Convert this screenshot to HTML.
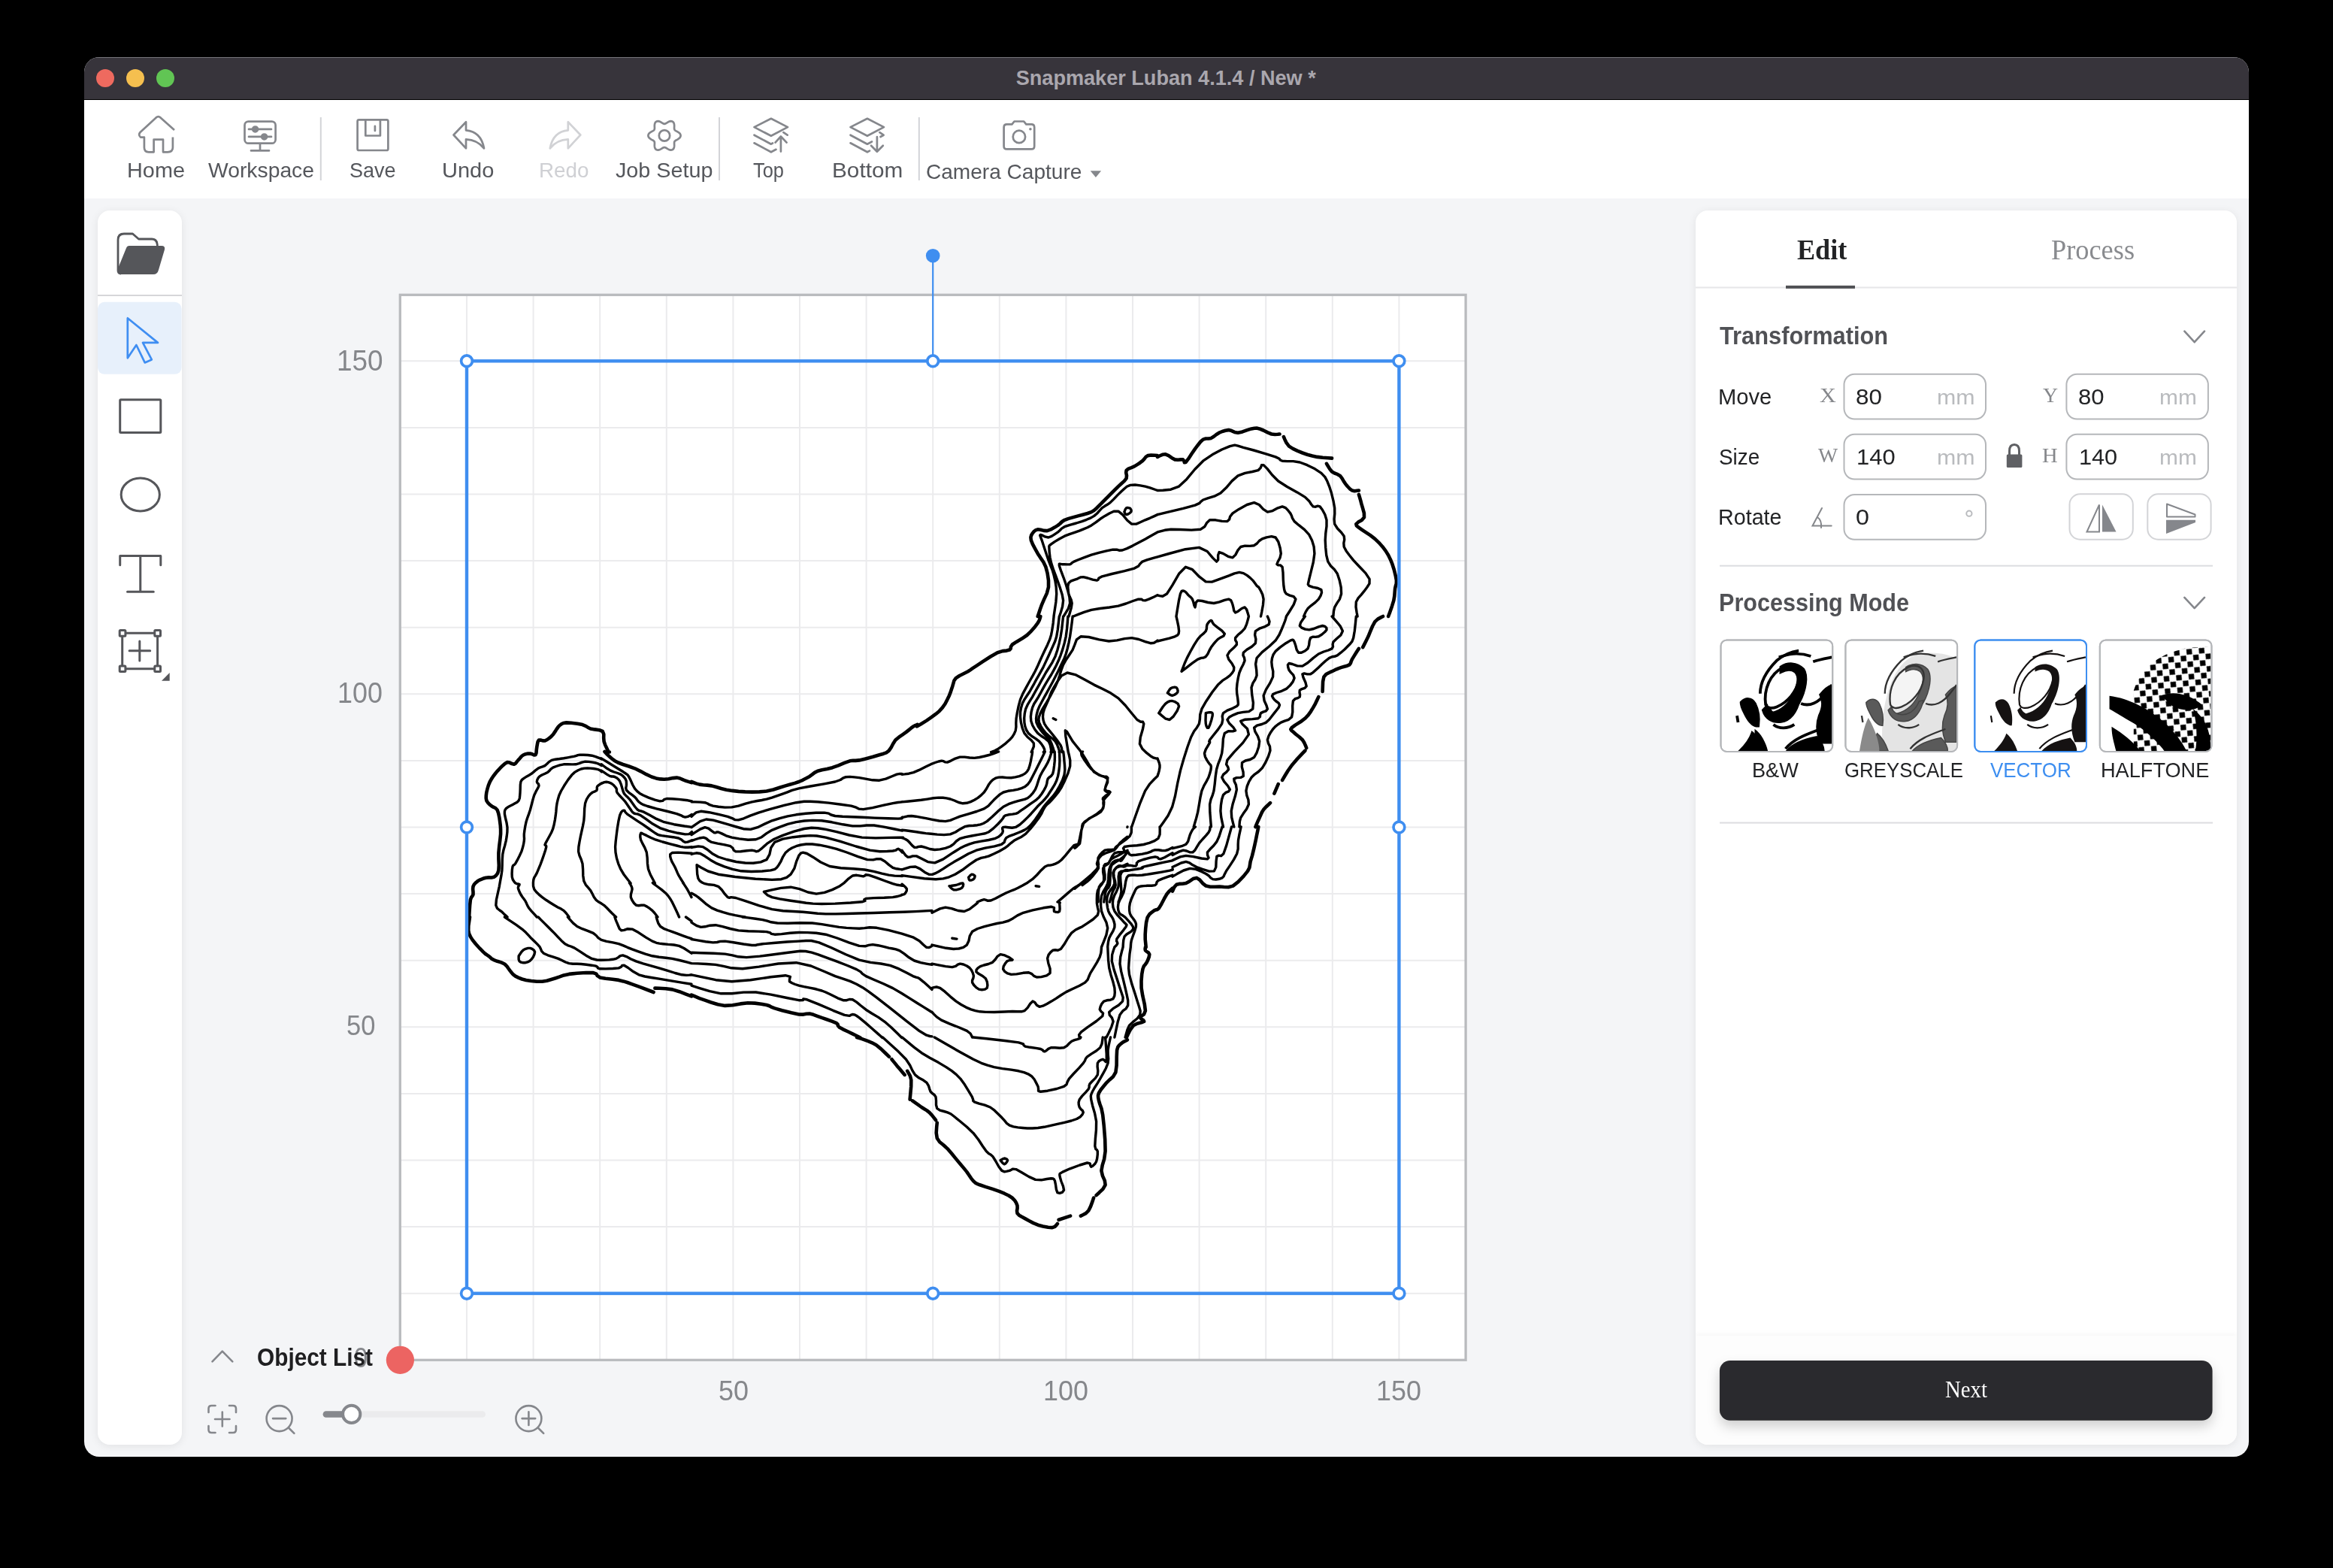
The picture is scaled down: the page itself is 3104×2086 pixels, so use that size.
<!DOCTYPE html>
<html><head><meta charset="utf-8">
<style>
*{box-sizing:border-box;margin:0;padding:0}
html,body{width:3104px;height:2086px;background:#000;overflow:hidden;position:relative}
.tx{position:absolute;white-space:nowrap;line-height:1}
.ov{position:absolute;left:0;top:0}
#win{position:absolute;left:112px;top:76px;width:2880px;height:1862px;border-radius:20px;overflow:hidden;background:#f4f5f7}
#title{position:absolute;left:0;top:0;width:100%;height:57px;background:#37343b;border-top:1.5px solid #77757b;border-bottom:1px solid #000}
.dot{position:absolute;top:14.5px;width:24px;height:24px;border-radius:50%}
#tb{position:absolute;left:0;top:57px;width:100%;height:131px;background:#fff}
#side{position:absolute;left:18px;top:204px;width:112px;height:1642px;background:#fff;border-radius:16px;box-shadow:0 2px 12px rgba(0,0,0,0.08)}
#rp{position:absolute;left:2144px;top:204px;width:720px;height:1642px;background:#fff;border-radius:16px;box-shadow:0 2px 12px rgba(0,0,0,0.08);overflow:hidden}
#rpb{position:absolute;left:0;top:1497px;width:720px;height:145px;background:#fdfdfd;box-shadow:0 -3px 6px rgba(0,0,0,0.03)}
</style></head>
<body>
<div id="win">
  <div id="title">
    <div class="dot" style="left:16px;background:#ee6a5f"></div>
    <div class="dot" style="left:56px;background:#f5bf4f"></div>
    <div class="dot" style="left:96px;background:#61c554"></div>
  </div>
  <div id="tb"></div>
  <div id="side"></div>
  <div id="rp"><div id="rpb"></div></div>
</div>
<svg class="ov" width="3104" height="2086" viewBox="0 0 3104 2086"><defs><filter id="btnsh" x="-10%" y="-50%" width="120%" height="200%"><feDropShadow dx="0" dy="8" stdDeviation="8" flood-color="#000" flood-opacity="0.18"/></filter></defs>
<g fill="none" stroke="#85878c" stroke-width="2.7" stroke-linecap="round" stroke-linejoin="round"><path d="M232,173.1 L213.5,156.4 Q210.6,154 207.7,156.4 L186.5,176 Q183.5,179.5 187,182.6 L191.9,182.6 L191.9,196.3 Q191.9,202.3 197.9,202.3 L204.6,202.3 L204.6,185.6 L217,185.6 L217,202.3 L223,202.3 Q229.9,202.3 229.9,196.3 L229.9,182.6" stroke-linecap="butt"/><rect x="325.5" y="161.6" width="41.1" height="29.1" rx="5"/><path d="M331,171.9 H361 M331,181.9 H361 M346,192 V199.7 M334,200.4 H358"/><circle cx="339.6" cy="171.9" r="3.4" fill="#85878c"/><circle cx="351.6" cy="181.9" r="3.4" fill="#85878c"/><rect x="475.6" y="159.3" width="40.8" height="40.7" rx="2"/><path d="M486.3,159.3 V180.5 H505.9 V159.3 M498.9,167.8 V174"/><path d="M603.5,179.5 L620,162.3 L620,173.3 Q640,175 644,197.3 Q635,186 620,185.4 L620,197.3 Z"/></g><g fill="none" stroke="#d1d2d5" stroke-width="2.7" stroke-linecap="round" stroke-linejoin="round"><path d="M772.3,179.5 L755.8,162.3 L755.8,173.3 Q735.8,175 731.8,197.3 Q740.8,186 755.8,185.4 L755.8,197.3 Z"/></g><g fill="none" stroke="#85878c" stroke-width="2.7" stroke-linecap="round" stroke-linejoin="round"><path d="M905.60,180.40 L905.42,179.28 L904.91,178.20 L904.11,177.21 L903.10,176.34 L901.97,175.59 L900.81,174.94 L899.72,174.37 L898.77,173.82 L898.03,173.25 L897.51,172.60 L897.21,171.82 L897.08,170.89 L897.08,169.80 L897.13,168.57 L897.15,167.25 L897.07,165.89 L896.82,164.57 L896.36,163.39 L895.68,162.41 L894.80,161.69 L893.74,161.29 L892.55,161.19 L891.30,161.39 L890.03,161.83 L888.81,162.43 L887.67,163.11 L886.63,163.77 L885.69,164.32 L884.82,164.67 L884.00,164.80 L883.18,164.67 L882.31,164.32 L881.37,163.77 L880.33,163.11 L879.19,162.43 L877.97,161.83 L876.70,161.39 L875.45,161.19 L874.26,161.29 L873.20,161.69 L872.32,162.41 L871.64,163.39 L871.18,164.57 L870.93,165.89 L870.85,167.25 L870.87,168.57 L870.92,169.80 L870.92,170.89 L870.79,171.82 L870.49,172.60 L869.97,173.25 L869.23,173.82 L868.28,174.37 L867.19,174.94 L866.03,175.59 L864.90,176.34 L863.89,177.21 L863.09,178.20 L862.58,179.28 L862.40,180.40 L862.58,181.52 L863.09,182.60 L863.89,183.59 L864.90,184.46 L866.03,185.21 L867.19,185.86 L868.28,186.43 L869.23,186.98 L869.97,187.55 L870.49,188.20 L870.79,188.98 L870.92,189.91 L870.92,191.00 L870.87,192.23 L870.85,193.55 L870.93,194.91 L871.18,196.23 L871.64,197.41 L872.32,198.39 L873.20,199.11 L874.26,199.51 L875.45,199.61 L876.70,199.41 L877.97,198.97 L879.19,198.37 L880.33,197.69 L881.37,197.03 L882.31,196.48 L883.18,196.13 L884.00,196.00 L884.82,196.13 L885.69,196.48 L886.63,197.03 L887.67,197.69 L888.81,198.37 L890.03,198.97 L891.30,199.41 L892.55,199.61 L893.74,199.51 L894.80,199.11 L895.68,198.39 L896.36,197.41 L896.82,196.23 L897.07,194.91 L897.15,193.55 L897.13,192.23 L897.08,191.00 L897.08,189.91 L897.21,188.98 L897.51,188.20 L898.03,187.55 L898.77,186.98 L899.72,186.43 L900.81,185.86 L901.97,185.21 L903.10,184.46 L904.11,183.59 L904.91,182.60 L905.42,181.52 L905.60,180.40Z"/><circle cx="884" cy="180.4" r="7.2"/><path d="M1025.9,157.8 L1048,169.1 L1025.9,180.8 L1003.5,169.1 Z"/><path d="M1003.5,179.7 L1025.9,191.7 L1028,190.5 M1042.4,176.2 L1047.6,179.7"/><path d="M1003.5,190.3 L1025.9,202.3 L1032.5,198.8"/><path d="M1038.9,182 V201.6 M1031.5,189.6 L1038.9,181.5 L1046.6,189.6"/><path d="M1153.9,157.8 L1176,169.1 L1153.9,180.8 L1131.5,169.1 Z"/><path d="M1131.5,179.7 L1153.9,191.7 L1160,188.5 M1170.4,176.2 L1175.6,179.7 L1171.5,182"/><path d="M1131.5,190.3 L1153.9,202.3 L1157,200.6"/><path d="M1166.9,182 V201.6 M1159,193.8 L1166.9,201.8 L1174.8,193.8"/><path d="M1339.6,165.4 H1346.4 L1349.5,161.5 H1362.2 L1365.3,165.4 H1372.2 Q1376.2,165.4 1376.2,169.4 V194.4 Q1376.2,198.4 1372.2,198.4 H1339.6 Q1335.6,198.4 1335.6,194.4 V169.4 Q1335.6,165.4 1339.6,165.4 Z"/><circle cx="1355.9" cy="181.9" r="8.2"/></g><circle cx="1370.9" cy="171.8" r="1.8" fill="#85878c"/><path d="M1450.7,227.2 H1465.1 L1457.9,235.9 Z" fill="#85878c"/><rect x="425.8" y="156" width="2" height="84" fill="#d3d4d8"/><rect x="956" y="156" width="2" height="84" fill="#d3d4d8"/><rect x="1221.8" y="156" width="2" height="84" fill="#d3d4d8"/><path d="M161,364 Q157,364 157,360 L157,319 Q157,311 165,311 L176.5,311 L184.5,318 L202,318 Q208,318 209,324 L209.5,327" fill="none" stroke="#55565a" stroke-width="2.8" stroke-linejoin="round"/><path d="M172,327 L215,327 Q220,327 219,332 L211,359 Q209.5,365 204,365 L161,365 Q157,365 157,361 L157,357 L168,330 Q169,327 172,327 Z" fill="#55565a"/><rect x="130" y="401.8" width="111.6" height="96" rx="9" fill="#e7f0fb"/><rect x="130" y="392" width="112" height="2" fill="#d6d6d9"/><path d="M169.8,423.3 L169.8,476.3 L181.4,459 L192.7,482.4 L201.8,478.4 L190,455.9 L210,455.9 Z" fill="none" stroke="#3f8ef2" stroke-width="2.7" stroke-linejoin="round"/><g fill="none" stroke="#55565a" stroke-width="3" stroke-linecap="round" stroke-linejoin="round"><rect x="159.7" y="531.8" width="54.1" height="43.8" rx="1"/><ellipse cx="186.75" cy="658" rx="25.6" ry="21.9"/><path d="M159.7,751.8 V739.4 H213.8 V751.8 M186.75,739.4 V787.3 M169.5,787.3 H204.3"/><path d="M167.6,842.3 H204.3 M167.6,889.7 H204.3 M162.7,847.7 V884.4 M209.6,847.7 V884.4 M172.1,865.7 H199.7 M185.8,853 V879"/><rect x="159.2" y="838.5" width="7.7" height="7.7" rx="1"/><rect x="205.8" y="838.5" width="7.7" height="7.7" rx="1"/><rect x="159.2" y="885.9" width="7.7" height="7.7" rx="1"/><rect x="205.8" y="885.9" width="7.7" height="7.7" rx="1"/></g><path d="M215,905.8 H225.7 V895 Z" fill="#55565a"/><rect x="531" y="391" width="1420.5" height="1419" fill="#ffffff"/><path d="M621.0,393 V1808 M533,1720.7 H1949 M709.6,393 V1808 M533,1632.1 H1949 M798.2,393 V1808 M533,1543.5 H1949 M886.8,393 V1808 M533,1454.9 H1949 M975.4,393 V1808 M533,1366.3 H1949 M1064.0,393 V1808 M533,1277.7 H1949 M1152.6,393 V1808 M533,1189.1 H1949 M1241.2,393 V1808 M533,1100.5 H1949 M1329.8,393 V1808 M533,1011.9 H1949 M1418.4,393 V1808 M533,923.3 H1949 M1507.0,393 V1808 M533,834.7 H1949 M1595.6,393 V1808 M533,746.1 H1949 M1684.2,393 V1808 M533,657.5 H1949 M1772.8,393 V1808 M533,568.9 H1949 M1861.4,393 V1808 M533,480.3 H1949" stroke="#ebebed" stroke-width="2" fill="none"/><rect x="532.3" y="392.3" width="1417.8" height="1417" fill="none" stroke="#b9bbbe" stroke-width="3.3"/><path d="M800.5,1009.9 L800.8,1010.0 L801.1,1010.1 L800.0,1009.6 L796.9,1008.3 L792.4,1006.6 L787.5,1005.2 L782.1,1004.5 L776.3,1004.3 L771.4,1004.3 L768.7,1004.6 L766.9,1005.3 L764.3,1006.1 L760.1,1006.9 L755.2,1007.8 L750.0,1008.7 L744.5,1009.5 L738.8,1010.2 L733.9,1011.4 L730.4,1013.6 L727.7,1016.3 L725.0,1018.6 L722.0,1019.9 L719.0,1020.8 L716.1,1022.1 L713.1,1024.3 L710.1,1026.9 L707.1,1029.3 L704.0,1031.2 L700.9,1032.9 L698.2,1034.6 L696.0,1036.1 L694.2,1037.6 L692.9,1040.0 L692.3,1044.2 L692.2,1049.5 L692.0,1054.3 L691.7,1058.3 L691.3,1062.0 L690.2,1065.0 L688.0,1067.2 L685.1,1068.8 L682.1,1070.4 L679.0,1072.1 L675.7,1073.8 L673.2,1075.7 L671.9,1077.6 L671.4,1079.6 L671.4,1082.9 L672.4,1088.0 L674.0,1094.4 L675.0,1100.7 L674.9,1106.7 L674.2,1112.6 L673.2,1118.6 L671.8,1124.4 L670.1,1130.2 L668.8,1136.4 L668.3,1143.3 L668.2,1150.6 L667.9,1157.9 L666.9,1164.9 L665.6,1171.9 L664.3,1179.3 L662.4,1187.9 L660.4,1197.0 L659.8,1204.3 L661.6,1208.5 L664.8,1211.0 L667.9,1213.2 L670.6,1215.9 L673.2,1218.3 L675.0,1220.0 M800.5,1018.5 L798.8,1017.5 L796.2,1016.2 L792.9,1015.0 L788.5,1014.1 L783.4,1013.4 L778.6,1013.2 L774.4,1014.1 L770.4,1015.7 L766.1,1016.8 L760.9,1016.9 L755.4,1016.6 L750.0,1016.8 L744.8,1017.9 L739.9,1019.5 L735.7,1021.2 L732.9,1023.2 L731.0,1025.4 L728.6,1027.5 L725.0,1029.3 L721.0,1031.0 L717.9,1032.9 L715.9,1035.2 L714.7,1037.7 L714.3,1040.0 L715.0,1041.7 L716.5,1043.1 L717.0,1045.4 L715.5,1048.7 L713.1,1052.9 L710.7,1057.9 L708.9,1064.0 L707.1,1071.0 L705.4,1077.5 L703.5,1083.1 L701.6,1088.3 L700.0,1093.6 L698.8,1099.2 L697.9,1104.8 L697.3,1109.6 L697.3,1112.9 L697.5,1115.5 L697.3,1118.6 L696.6,1122.9 L695.4,1127.8 L693.8,1132.9 L691.2,1138.5 L688.2,1144.4 L685.7,1148.9 L684.1,1150.6 L683.0,1151.0 L682.1,1152.5 L681.4,1156.7 L681.1,1162.1 L681.3,1166.8 L682.3,1170.2 L684.0,1172.8 L685.7,1174.8 L687.7,1175.8 L689.8,1176.0 L691.1,1176.6 L690.8,1177.7 L689.7,1179.2 L689.3,1181.1 L690.0,1183.7 L691.3,1186.9 L692.9,1190.0 L694.8,1193.0 L697.1,1196.0 L699.1,1198.9 L700.5,1201.8 L701.7,1204.6 L703.6,1207.9 L707.1,1212.1 L711.3,1216.7 L714.3,1220.0 M800.5,1026.8 L799.7,1026.0 L798.4,1024.9 L796.4,1023.9 L793.4,1023.2 L789.7,1022.5 L785.7,1022.1 L781.7,1022.0 L777.4,1022.1 L773.2,1023.0 L769.1,1024.7 L765.0,1027.1 L760.7,1031.1 L755.8,1037.4 L750.6,1045.3 L746.4,1052.5 L743.8,1058.3 L742.3,1063.4 L741.1,1068.6 L740.3,1073.9 L739.9,1079.2 L739.3,1084.6 L738.4,1090.6 L737.2,1096.7 L735.7,1102.5 L733.5,1107.8 L730.8,1112.7 L728.6,1116.8 L726.9,1119.9 L725.7,1122.1 L725.0,1123.9 L725.5,1124.6 L726.5,1124.8 L726.8,1126.6 L725.6,1131.2 L723.6,1137.3 L721.4,1143.6 L719.1,1149.8 L716.5,1156.1 L714.3,1161.4 L712.4,1164.9 L710.8,1167.4 L709.8,1170.4 L709.4,1174.3 L709.5,1178.7 L710.7,1182.9 L713.4,1186.6 L717.1,1190.1 L721.4,1193.6 L726.5,1197.3 L732.2,1201.0 L737.5,1204.3 L742.1,1206.9 L746.4,1209.1 L750.0,1211.4 L753.0,1214.5 L755.5,1217.7 L757.1,1220.0 M800.5,1041.9 L798.8,1043.0 L796.4,1044.6 L794.6,1046.2 L794.2,1048.0 L794.4,1049.9 L793.8,1051.6 L791.6,1052.9 L788.6,1054.0 L785.7,1056.1 L783.1,1059.2 L780.5,1063.3 L778.6,1068.6 L777.7,1075.6 L777.4,1083.8 L776.8,1091.8 L775.4,1099.1 L773.8,1106.3 L772.3,1113.2 L771.0,1120.0 L769.9,1126.6 L769.6,1132.9 L771.0,1138.2 L773.2,1143.2 L775.0,1148.9 L775.6,1156.5 L775.8,1164.9 L776.8,1172.1 L779.3,1177.1 L782.6,1180.9 L785.7,1184.6 L788.1,1189.0 L790.3,1193.4 L792.9,1197.1 L796.2,1199.8 L799.9,1201.8 L803.6,1204.3 L807.3,1207.8 L811.1,1211.7 L814.3,1215.0 L816.7,1217.3 L818.5,1218.9 L819.6,1220.0 M837.4,1174.5 L837.9,1175.2 L838.6,1176.2 L839.3,1177.5 L840.0,1178.9 L840.7,1180.6 L841.1,1182.9 L840.4,1186.0 L839.4,1189.8 L839.3,1193.6 L840.9,1197.5 L843.5,1201.5 L846.4,1204.3 L849.7,1204.8 L853.4,1204.2 L857.1,1204.3 L860.8,1206.1 L864.6,1208.7 L867.9,1211.4 L870.8,1214.5 L873.3,1217.7 L875.0,1220.0 M869.2,1174.5 L868.8,1174.4 L868.3,1174.4 L869.6,1175.7 L874.1,1179.0 L880.3,1183.6 L885.7,1188.2 L889.2,1192.1 L891.9,1196.0 L894.6,1200.7 L897.9,1207.4 L901.3,1214.7 L903.6,1220.0 M908.7,1174.5 L910.2,1176.6 L912.2,1179.6 L914.3,1182.9 L916.4,1186.7 L918.5,1190.7 L920.0,1193.6 M800.0,1008.9 L805.5,1012.3 L813.2,1017.0 L820.1,1021.2 L825.0,1024.3 L829.1,1026.8 L832.4,1029.0 L834.3,1030.3 L835.4,1031.3 L836.8,1033.5 L839.1,1038.1 L841.7,1044.0 L844.6,1049.1 L847.7,1052.6 L851.1,1055.4 L855.8,1058.0 L862.9,1061.1 L871.3,1064.1 L878.1,1065.8 L881.6,1065.4 L883.5,1063.7 L887.1,1062.5 L894.3,1062.7 L903.1,1063.4 L910.5,1064.2 L915.2,1064.8 L918.4,1065.5 L920.5,1065.9 M800.0,1016.7 L803.1,1019.0 L807.6,1022.3 L812.3,1025.1 L816.9,1027.0 L821.7,1028.5 L825.7,1030.1 L828.6,1032.2 L830.8,1034.5 L832.4,1036.8 L833.2,1039.0 L833.4,1041.2 L833.5,1043.5 L833.2,1046.0 L832.7,1048.6 L833.5,1051.3 L836.6,1054.3 L840.9,1057.4 L844.6,1060.3 L846.7,1062.7 L848.2,1064.9 L850.2,1067.0 L852.5,1068.7 L855.4,1070.4 L861.4,1072.5 L873.4,1075.8 L888.5,1079.5 L900.4,1082.6 L906.3,1084.8 L909.1,1086.4 L911.6,1087.1 L915.1,1086.4 L918.3,1084.8 L920.5,1083.6 M800.0,1025.1 L803.1,1027.2 L807.4,1030.1 L811.2,1032.4 L813.7,1033.0 L815.8,1033.0 L817.9,1033.5 L820.2,1034.7 L822.5,1036.5 L824.6,1039.1 L826.3,1043.3 L827.8,1048.4 L829.0,1052.5 L829.8,1054.5 L830.3,1055.6 L831.3,1056.9 L833.0,1058.7 L835.3,1060.8 L837.9,1063.6 L841.1,1068.0 L844.6,1073.0 L848.0,1077.0 L850.4,1078.5 L852.7,1078.9 L856.9,1080.4 L864.2,1084.3 L873.4,1089.4 L883.7,1093.7 L896.6,1096.7 L910.6,1099.0 L920.5,1100.4 M800.0,1042.4 L801.7,1041.6 L804.1,1040.6 L806.7,1040.2 L809.3,1040.6 L812.0,1041.6 L814.5,1043.0 L816.7,1044.8 L818.6,1047.0 L820.1,1049.1 L820.5,1050.8 L820.3,1052.4 L821.2,1054.7 L824.0,1058.0 L827.7,1061.9 L831.3,1065.8 L834.1,1069.8 L836.8,1073.7 L839.1,1077.0 L840.6,1079.2 L841.8,1080.7 L843.5,1082.0 L845.6,1082.6 L848.1,1082.9 L852.5,1084.8 L859.5,1089.7 L868.4,1096.1 L878.1,1101.6 L889.6,1105.4 L902.0,1108.3 L911.6,1109.9 L916.7,1109.6 L919.1,1107.9 L920.5,1106.6 M839.1,1175.0 L835.3,1170.3 L830.1,1163.5 L825.7,1156.2 L822.7,1149.1 L820.4,1141.5 L819.0,1133.9 L818.6,1126.7 L819.2,1119.4 L820.1,1111.6 L821.3,1102.3 L822.9,1092.4 L824.6,1084.8 L826.4,1080.7 L828.3,1078.7 L830.1,1078.1 L831.1,1078.6 L831.9,1080.4 L834.6,1083.1 L840.6,1087.2 L848.4,1092.3 L855.8,1097.1 L862.0,1101.5 L867.8,1105.7 L872.5,1108.8 L875.3,1110.4 L877.0,1111.0 L880.4,1111.6 L887.2,1112.6 L895.7,1113.7 L902.7,1115.0 L906.6,1117.0 L909.1,1119.2 L911.6,1120.5 L914.9,1120.1 L918.2,1118.8 L920.5,1117.8 M871.4,1175.0 L868.9,1170.3 L865.3,1163.5 L862.5,1156.2 L861.5,1148.9 L861.2,1141.1 L860.3,1133.9 L857.8,1127.6 L854.7,1121.9 L852.5,1117.2 L851.8,1113.4 L851.9,1110.6 L852.5,1108.8 L852.8,1108.1 L853.6,1108.3 L855.8,1109.4 L860.0,1111.4 L865.6,1114.3 L872.5,1117.2 L881.6,1120.0 L892.0,1122.8 L900.4,1125.0 L905.5,1126.3 L908.7,1126.9 L911.6,1127.2 L915.1,1127.3 L918.3,1127.0 L920.5,1126.8 M909.4,1175.0 L907.6,1172.1 L905.0,1168.0 L902.7,1164.1 L901.1,1160.7 L899.7,1157.4 L898.2,1154.0 L896.2,1150.3 L894.0,1146.4 L892.6,1142.9 L891.7,1139.5 L891.7,1136.5 L894.3,1134.5 L902.2,1134.1 L912.8,1134.7 L920.5,1135.3 M671.4,1220.0 L677.8,1224.3 L686.8,1230.4 L694.6,1236.1 L699.7,1240.6 L703.5,1244.7 L707.1,1248.6 L711.0,1252.3 L714.7,1255.9 L717.9,1259.3 L719.5,1262.5 L720.6,1265.4 L723.2,1268.2 L728.9,1270.8 L736.2,1273.1 L742.9,1275.4 L747.9,1277.7 L752.4,1280.0 L757.1,1281.6 L762.2,1282.2 L767.5,1282.3 L773.2,1282.5 L780.0,1283.2 L787.2,1284.2 L792.9,1285.2 L795.0,1286.5 L795.5,1287.9 L798.2,1288.8 L805.8,1288.9 L815.5,1288.5 L823.2,1287.9 L826.5,1286.3 L827.7,1284.4 L830.4,1284.3 L835.7,1287.5 L842.5,1292.6 L850.0,1296.8 L857.8,1299.0 L866.4,1300.5 L876.8,1302.1 L891.6,1304.7 L908.2,1307.4 L920.0,1309.3 M716.1,1220.0 L719.4,1223.4 L724.2,1228.1 L728.6,1232.5 L731.6,1235.5 L734.3,1238.2 L737.5,1241.4 L741.9,1246.1 L747.0,1251.4 L751.8,1255.7 L755.7,1257.8 L759.4,1259.0 L764.3,1261.1 L771.4,1265.6 L779.8,1271.2 L787.5,1275.4 L794.0,1277.0 L799.9,1277.3 L805.4,1277.1 L810.6,1276.9 L815.4,1276.3 L819.6,1275.4 L822.7,1273.6 L825.1,1271.6 L828.6,1270.9 L833.4,1272.6 L839.2,1275.7 L846.4,1278.9 L855.6,1281.8 L866.2,1284.8 L876.8,1287.9 L887.6,1291.2 L898.3,1294.5 L907.1,1296.8 L913.2,1297.4 L917.3,1297.1 L920.0,1296.8 M755.4,1220.0 L758.3,1223.4 L762.6,1228.1 L767.9,1232.5 L774.7,1235.7 L782.6,1238.6 L789.3,1241.4 L793.2,1244.5 L795.9,1247.6 L800.0,1250.4 L807.0,1252.3 L815.4,1253.9 L823.2,1255.7 L829.2,1257.9 L834.7,1260.3 L841.1,1262.9 L849.3,1265.9 L858.6,1269.1 L867.9,1271.8 L876.8,1273.3 L885.8,1274.2 L894.6,1275.4 L904.1,1277.5 L913.5,1279.9 L920.0,1281.6 M817.9,1220.0 L818.7,1222.3 L820.0,1225.6 L821.4,1228.9 L822.8,1232.3 L824.3,1235.7 L826.8,1237.9 L830.4,1237.4 L835.1,1235.7 L841.1,1236.1 L849.5,1240.6 L859.4,1247.1 L867.9,1252.1 L873.3,1254.3 L877.3,1255.1 L882.1,1255.7 L888.9,1256.4 L896.5,1257.0 L903.6,1258.4 L910.0,1261.5 L915.9,1265.4 L920.0,1268.2 M873.2,1220.0 L874.2,1223.4 L875.8,1228.3 L878.6,1232.5 L883.0,1235.3 L888.6,1237.5 L894.6,1239.6 L901.4,1242.2 L908.6,1244.8 L914.3,1246.8 L917.4,1247.8 L919.0,1248.3 L920.0,1248.6 M912.5,1220.0 L920.0,1225.4 M690.2,1271.8 L691.7,1269.5 L693.9,1266.3 L696.4,1263.8 L699.3,1262.3 L702.5,1261.4 L705.4,1261.4 L708.0,1262.4 L710.4,1264.1 L711.6,1266.4 L711.0,1269.5 L709.3,1273.2 L707.1,1276.2 L704.7,1278.4 L701.9,1279.9 L699.1,1280.7 L696.2,1280.8 L693.2,1280.2 L691.1,1278.9 L690.2,1276.7 L690.1,1273.8 L690.2,1271.8 M920.0,1066.8 L924.9,1066.9 L931.8,1067.1 L937.9,1067.7 L941.4,1069.0 L944.2,1070.7 L948.6,1072.1 L955.8,1073.3 L964.6,1074.1 L973.6,1073.9 L982.6,1072.1 L991.9,1069.2 L1000.4,1066.8 L1007.4,1065.5 L1013.6,1064.5 L1020.0,1063.2 L1027.0,1061.1 L1034.2,1058.6 L1041.4,1056.1 L1047.6,1053.8 L1053.7,1051.4 L1062.9,1048.9 L1078.2,1046.0 L1096.5,1042.8 L1111.1,1040.0 L1118.2,1037.5 L1121.6,1035.2 L1125.4,1033.7 L1130.7,1033.4 L1136.5,1033.9 L1143.2,1034.6 L1151.6,1036.1 L1161.0,1037.8 L1170.0,1038.2 L1178.6,1036.1 L1186.8,1032.7 L1193.2,1030.2 L1197.1,1029.4 L1199.2,1029.5 L1200.5,1029.7 M920.0,1086.4 L922.4,1084.0 L926.2,1080.9 L932.5,1079.3 L943.5,1080.7 L957.0,1083.7 L968.2,1086.4 L974.1,1088.6 L977.6,1090.6 L982.5,1090.9 L989.6,1088.8 L998.2,1085.1 L1009.3,1081.1 L1025.0,1076.4 L1043.3,1071.3 L1059.3,1067.7 L1069.8,1066.2 L1077.9,1066.2 L1087.9,1066.8 L1102.6,1068.1 L1119.1,1070.2 L1132.5,1072.1 L1139.1,1074.2 L1142.6,1076.1 L1148.6,1076.6 L1160.9,1074.6 L1175.9,1071.2 L1187.9,1068.6 L1194.5,1067.5 L1198.2,1067.1 L1200.5,1066.8 M920.0,1100.7 L924.7,1097.3 L931.6,1092.6 L939.6,1090.0 L949.0,1091.1 L959.6,1094.2 L970.0,1097.1 L979.7,1100.0 L989.1,1102.7 L998.6,1103.4 L1008.0,1100.7 L1017.4,1096.1 L1027.1,1091.8 L1037.4,1088.6 L1048.0,1085.9 L1059.3,1083.8 L1072.2,1082.2 L1085.8,1081.2 L1096.8,1081.1 L1102.5,1082.1 L1105.6,1084.0 L1111.1,1085.5 L1120.9,1086.3 L1133.2,1086.8 L1146.8,1087.3 L1163.5,1088.1 L1181.6,1088.8 L1195.0,1089.1 L1200.2,1088.7 L1200.7,1087.9 L1200.5,1087.3 M920.0,1110.5 L924.8,1107.4 L931.6,1103.1 L937.9,1100.7 L942.7,1102.1 L946.9,1105.4 L950.4,1107.9 L952.2,1107.9 L953.3,1107.0 L955.7,1107.0 L960.2,1108.9 L966.1,1111.8 L973.6,1114.1 L983.6,1115.9 L995.3,1117.2 L1005.7,1116.8 L1013.3,1113.7 L1019.6,1108.9 L1027.1,1104.3 L1037.0,1100.3 L1048.0,1096.4 L1059.3,1093.6 L1070.2,1092.0 L1081.3,1091.4 L1093.2,1091.8 L1106.8,1093.8 L1121.3,1096.8 L1134.3,1098.9 L1144.4,1098.9 L1153.1,1098.0 L1162.9,1098.0 L1176.1,1100.1 L1190.4,1103.0 L1200.5,1105.1 M920.0,1118.6 L924.4,1117.0 L930.5,1115.0 L936.1,1114.1 L939.5,1115.4 L942.4,1117.9 L946.8,1120.4 L954.7,1122.1 L964.2,1123.8 L971.8,1125.7 L975.0,1128.3 L976.2,1131.1 L978.9,1132.9 L985.5,1132.8 L993.6,1131.8 L1000.4,1131.1 L1003.9,1131.8 L1006.0,1132.8 L1009.3,1132.0 L1014.2,1128.1 L1020.4,1122.4 L1028.9,1116.8 L1041.5,1111.4 L1056.4,1106.1 L1070.0,1102.5 L1079.7,1101.3 L1088.1,1101.8 L1098.6,1103.4 L1113.1,1106.6 L1129.9,1111.0 L1146.8,1114.1 L1165.0,1114.9 L1183.5,1114.4 L1196.8,1114.1 L1201.6,1114.3 L1201.3,1114.6 L1200.5,1114.8 M920.0,1127.5 L923.7,1126.7 L929.2,1125.9 L935.2,1126.6 L941.1,1130.2 L947.5,1135.4 L955.7,1140.0 L966.8,1143.5 L979.5,1146.5 L991.4,1148.0 L1002.1,1148.2 L1012.1,1146.9 L1020.0,1143.6 L1023.9,1136.7 L1025.8,1127.7 L1030.7,1120.4 L1041.5,1116.2 L1055.3,1113.7 L1068.2,1112.3 L1077.8,1111.6 L1086.6,1112.0 L1098.6,1114.1 L1117.2,1119.2 L1138.9,1126.0 L1157.5,1131.1 L1170.6,1132.7 L1180.5,1132.5 L1187.9,1132.0 L1192.0,1131.1 L1193.6,1129.8 L1195.0,1129.3 L1197.2,1130.5 L1199.1,1132.5 L1200.5,1134.0 M920.0,1136.4 L922.6,1135.7 L926.5,1134.8 L931.6,1135.5 L937.9,1139.1 L945.4,1144.2 L953.9,1148.9 L963.7,1152.9 L974.5,1156.4 L986.1,1158.8 L999.7,1159.5 L1014.1,1159.0 L1025.4,1157.9 L1031.1,1156.3 L1033.7,1154.0 L1036.1,1150.7 L1039.0,1145.8 L1041.7,1139.8 L1045.0,1134.6 L1049.1,1130.9 L1053.8,1128.0 L1059.3,1125.7 L1065.5,1124.0 L1072.5,1123.0 L1080.7,1123.0 L1090.3,1124.2 L1101.1,1126.3 L1112.9,1129.3 L1126.7,1134.0 L1141.6,1139.6 L1153.9,1143.6 L1161.7,1143.9 L1166.8,1142.6 L1171.8,1142.7 L1177.4,1146.0 L1182.8,1150.6 L1187.9,1154.3 L1192.8,1155.8 L1197.3,1156.4 L1200.5,1156.7 M927.1,1150.7 L933.0,1154.2 L942.0,1159.0 L955.7,1163.2 L978.1,1166.5 L1005.2,1169.2 L1027.1,1170.4 L1039.4,1169.7 L1046.6,1167.4 L1052.1,1163.2 L1056.8,1155.4 L1059.8,1145.6 L1062.9,1138.2 L1065.7,1134.9 L1068.5,1134.1 L1073.6,1135.5 L1081.6,1140.2 L1091.9,1147.0 L1103.9,1152.5 L1118.7,1154.8 L1135.3,1155.7 L1150.4,1157.0 L1162.7,1159.4 L1173.4,1162.1 L1182.5,1164.1 L1190.2,1165.1 L1196.4,1165.4 L1200.5,1165.5 M927.1,1150.7 L927.3,1155.7 L927.7,1162.8 L928.9,1168.6 L931.0,1171.9 L934.0,1174.0 L937.9,1175.7 L943.3,1176.8 L949.8,1177.4 L955.7,1179.3 L960.3,1183.7 L964.4,1189.4 L968.2,1193.6 L970.5,1194.3 L972.6,1193.6 L978.9,1194.5 L992.5,1198.9 L1010.2,1204.9 L1027.1,1209.6 L1041.8,1211.7 L1055.6,1212.5 L1068.2,1213.2 L1078.6,1214.3 L1087.8,1215.3 L1098.6,1215.9 L1111.9,1215.9 L1126.7,1215.5 L1143.2,1215.0 L1162.6,1214.5 L1183.5,1213.8 L1202.1,1213.2 L1217.7,1212.6 L1231.0,1211.9 L1240.0,1211.4 M920.0,1188.2 L922.0,1189.3 L925.0,1190.9 L928.9,1193.6 L934.0,1197.9 L940.1,1203.2 L946.8,1207.9 L954.2,1211.1 L962.2,1213.7 L970.0,1215.9 L978.1,1217.7 L985.9,1219.1 L991.4,1220.0 M1016.4,1186.4 L1025.8,1184.2 L1039.0,1181.4 L1052.1,1180.2 L1063.7,1182.7 L1075.1,1187.0 L1086.1,1189.1 L1096.9,1187.4 L1107.4,1183.6 L1116.4,1179.3 L1123.4,1174.3 L1129.1,1168.8 L1134.3,1165.0 L1139.6,1164.3 L1144.5,1165.2 L1148.6,1165.9 L1150.6,1165.0 L1151.7,1163.8 L1155.7,1164.1 L1165.3,1167.3 L1177.7,1172.0 L1187.9,1175.7 L1194.0,1177.3 L1197.9,1177.9 L1200.5,1178.2 M1200.5,1190.4 L1198.1,1191.3 L1194.2,1192.5 L1187.9,1193.6 L1176.5,1194.2 L1162.7,1194.6 L1152.1,1195.4 L1149.9,1196.7 L1151.0,1198.4 L1146.8,1199.8 L1131.6,1201.0 L1111.1,1202.1 L1093.2,1202.5 L1081.6,1202.1 L1072.5,1201.2 L1062.9,1199.8 L1050.4,1198.0 L1037.4,1195.9 L1027.1,1193.6 L1021.3,1191.0 L1018.3,1188.3 L1016.4,1186.4 M920.0,1311.1 L929.9,1314.3 L944.2,1318.7 L959.3,1321.8 L973.8,1321.7 L989.2,1320.1 L1005.7,1320.0 L1025.7,1323.1 L1046.9,1327.5 L1062.9,1330.7 L1068.4,1330.5 L1068.8,1329.0 L1073.6,1329.8 L1088.8,1335.9 L1108.4,1344.3 L1123.6,1350.4 L1130.1,1351.4 L1132.3,1350.2 L1134.3,1349.5 L1136.8,1349.9 L1139.1,1351.0 L1143.2,1353.9 L1151.1,1360.4 L1160.7,1368.8 L1168.2,1375.4 L1171.8,1378.5 L1173.1,1379.8 L1173.9,1380.5 M920.0,1296.8 L933.2,1299.7 L952.4,1303.7 L973.6,1305.7 L998.5,1303.7 L1025.4,1299.8 L1045.0,1297.7 L1051.4,1299.3 L1050.5,1302.6 L1050.4,1305.7 L1053.7,1307.7 L1057.8,1309.5 L1062.9,1311.1 L1069.6,1312.6 L1077.3,1314.1 L1084.3,1315.5 L1089.2,1316.8 L1093.4,1318.0 L1098.6,1320.0 L1106.0,1323.5 L1114.5,1327.8 L1121.8,1330.7 L1126.5,1330.7 L1130.1,1329.5 L1134.3,1329.8 L1139.6,1333.1 L1145.5,1338.0 L1152.1,1343.2 L1160.0,1348.2 L1168.7,1353.4 L1177.1,1359.3 L1185.7,1366.8 L1194.0,1374.8 L1199.8,1380.5 M920.0,1281.6 L928.2,1281.9 L940.0,1282.5 L952.1,1283.4 L962.5,1285.4 L973.2,1287.8 L987.9,1288.8 L1009.7,1286.1 L1035.6,1282.0 L1059.3,1280.7 L1078.9,1285.0 L1096.3,1292.2 L1111.1,1298.6 L1122.4,1302.4 L1131.1,1305.4 L1139.6,1309.3 L1147.6,1313.7 L1155.3,1318.9 L1166.4,1327.1 L1184.7,1341.4 L1206.4,1358.7 L1223.6,1371.8 L1232.7,1377.2 L1237.2,1378.5 L1240.0,1378.9 M920.0,1267.3 L932.2,1267.7 L949.3,1268.2 L964.6,1269.1 L974.4,1270.8 L982.3,1272.8 L993.2,1273.6 L1010.9,1272.1 L1031.5,1269.5 L1048.6,1267.3 L1058.6,1266.0 L1065.0,1265.2 L1071.8,1265.5 L1079.9,1267.2 L1088.5,1269.9 L1098.6,1273.6 L1112.3,1278.6 L1127.5,1284.5 L1139.6,1289.6 L1145.1,1292.9 L1147.3,1295.3 L1152.1,1298.6 L1162.5,1303.3 L1175.4,1308.8 L1187.9,1314.6 L1199.3,1321.2 L1210.3,1328.1 L1220.0,1334.3 L1228.3,1339.4 L1235.3,1343.8 L1240.0,1346.8 M920.0,1249.5 L927.9,1250.9 L938.9,1252.7 L948.6,1253.9 L954.1,1253.5 L958.3,1252.4 L964.6,1252.1 L975.9,1253.7 L989.3,1256.0 L1000.4,1257.5 L1005.4,1257.5 L1008.2,1256.7 L1014.6,1255.7 L1029.0,1254.5 L1047.1,1253.0 L1062.9,1252.1 L1072.4,1251.5 L1079.5,1251.5 L1089.6,1253.9 L1106.0,1260.7 L1125.3,1269.8 L1143.2,1277.1 L1158.2,1280.4 L1171.9,1282.0 L1184.3,1284.3 L1196.0,1288.9 L1206.5,1294.3 L1214.6,1298.6 L1218.9,1300.2 L1220.8,1300.6 L1223.6,1302.1 L1229.1,1306.6 L1235.5,1312.3 L1240.0,1316.4 M920.0,1227.1 L923.0,1229.1 L927.3,1231.7 L932.5,1233.4 L938.1,1232.8 L944.5,1231.2 L952.1,1230.7 L961.2,1232.6 L971.5,1235.5 L982.5,1237.9 L995.5,1238.8 L1009.2,1239.1 L1020.0,1239.6 L1024.8,1240.9 L1026.5,1242.4 L1030.7,1243.2 L1039.7,1242.6 L1051.1,1241.3 L1062.9,1240.5 L1074.2,1240.6 L1085.9,1241.2 L1098.6,1243.2 L1113.8,1248.0 L1130.0,1254.1 L1143.2,1258.4 L1151.0,1258.8 L1155.8,1257.4 L1161.1,1256.6 L1168.2,1257.7 L1175.8,1259.4 L1182.5,1261.1 L1187.6,1262.0 L1191.9,1262.8 L1196.8,1264.6 L1202.8,1268.7 L1209.4,1273.8 L1216.4,1278.0 L1224.9,1280.6 L1233.7,1282.3 L1240.0,1283.4 M987.9,1220.0 L995.1,1220.9 L1005.3,1222.2 L1014.6,1223.6 L1020.7,1225.2 L1026.0,1226.8 L1034.3,1228.0 L1048.2,1228.2 L1065.0,1227.8 L1080.7,1228.0 L1093.7,1229.6 L1105.6,1231.7 L1116.4,1233.4 L1126.2,1234.4 L1134.9,1234.9 L1143.2,1235.2 L1150.3,1234.6 L1157.0,1233.7 L1166.4,1234.3 L1181.8,1237.4 L1199.9,1242.1 L1214.6,1246.8 L1223.2,1251.7 L1228.4,1256.8 L1232.5,1260.2 L1236.0,1260.6 L1238.4,1259.4 L1240.0,1258.4 M1318.5,1000.5 L1320.4,999.9 L1323.4,998.8 L1327.1,996.8 L1332.2,993.3 L1338.2,988.8 L1343.2,984.3 L1346.8,980.3 L1349.4,976.2 L1351.2,971.8 L1351.9,967.0 L1351.8,961.9 L1352.1,955.7 L1353.4,947.9 L1355.2,939.1 L1357.5,930.7 L1360.7,923.1 L1364.6,915.9 L1368.2,909.3 L1371.3,903.7 L1374.2,898.6 L1377.1,893.2 L1380.1,887.1 L1383.0,880.5 L1386.1,873.6 L1389.8,865.8 L1393.7,857.7 L1396.8,850.4 L1398.6,844.4 L1399.6,839.2 L1400.4,834.3 L1401.2,828.9 L1401.7,823.6 L1402.1,820.0 M1372.2,1000.5 L1373.6,997.5 L1375.4,993.2 L1375.4,988.8 L1372.1,984.7 L1367.1,980.5 L1362.9,975.4 L1360.2,968.7 L1358.4,961.1 L1357.5,953.9 L1357.5,947.6 L1358.5,941.8 L1360.2,936.1 L1363.0,930.6 L1366.5,925.3 L1370.0,920.0 L1373.0,914.6 L1376.0,909.3 L1378.9,903.9 L1381.8,898.8 L1384.7,893.7 L1387.9,887.9 L1391.4,880.4 L1395.2,872.2 L1398.6,864.6 L1401.3,858.6 L1403.7,853.2 L1405.7,846.8 L1407.3,837.5 L1408.5,827.3 L1409.3,820.0 M1388.3,1000.5 L1388.9,999.8 L1389.8,998.7 L1389.6,996.8 L1388.2,993.7 L1385.7,989.9 L1382.5,986.1 L1377.9,982.6 L1372.6,979.2 L1368.2,975.4 L1365.5,971.0 L1363.8,966.2 L1362.9,961.1 L1362.7,955.3 L1363.3,949.2 L1364.6,943.2 L1367.1,937.7 L1370.3,932.4 L1373.6,927.1 L1376.5,921.8 L1379.5,916.4 L1382.5,911.1 L1385.3,905.9 L1388.2,900.8 L1391.4,895.0 L1395.5,888.5 L1400.0,881.3 L1403.9,873.6 L1406.8,865.0 L1409.2,855.9 L1411.1,846.8 L1412.7,836.9 L1413.8,826.9 L1414.6,820.0 M1398.0,1000.5 L1398.3,1000.4 L1398.7,1000.1 L1398.6,998.6 L1398.1,995.1 L1397.1,990.5 L1395.0,986.1 L1390.8,982.6 L1385.5,979.3 L1380.7,975.4 L1376.9,970.5 L1373.8,965.0 L1371.8,959.3 L1371.4,953.3 L1372.1,947.2 L1373.6,941.4 L1375.7,936.5 L1378.6,932.0 L1381.6,927.1 L1384.7,921.5 L1388.0,915.4 L1391.4,909.3 L1395.0,903.4 L1398.7,897.5 L1402.1,891.4 L1405.3,885.2 L1408.3,878.8 L1411.1,871.8 L1413.8,863.9 L1416.2,855.4 L1418.2,846.8 L1419.5,837.0 L1420.4,827.0 L1420.9,820.0 M1401.8,1000.5 L1402.1,1000.5 L1402.5,1000.2 L1402.1,998.6 L1400.9,994.5 L1399.0,989.1 L1396.8,984.3 L1394.1,981.1 L1391.0,978.5 L1387.9,975.4 L1384.5,971.1 L1381.1,966.2 L1378.9,961.1 L1378.5,955.9 L1379.2,950.6 L1380.7,945.0 L1383.1,939.2 L1386.3,933.3 L1389.6,927.1 L1393.1,920.8 L1396.7,914.2 L1400.4,907.5 L1404.1,900.3 L1407.8,892.9 L1411.1,886.1 L1413.8,880.6 L1416.1,875.7 L1418.2,870.0 L1420.2,862.9 L1422.0,855.1 L1423.6,846.8 L1425.0,837.1 L1426.3,827.1 L1427.1,820.0 M1409.1,1000.5 L1409.4,1000.4 L1409.6,1000.1 L1409.3,998.6 L1408.2,995.1 L1406.4,990.5 L1403.9,986.1 L1400.2,982.5 L1395.6,979.1 L1391.4,975.4 L1387.8,970.8 L1384.6,965.8 L1382.5,961.1 L1381.9,957.1 L1382.5,953.3 L1384.3,948.6 L1387.7,942.1 L1392.4,934.6 L1396.8,927.1 L1400.6,920.0 L1404.3,912.9 L1407.5,905.7 L1409.9,898.5 L1412.0,891.3 L1414.6,884.3 L1418.5,877.5 L1422.9,871.0 L1427.1,864.6 L1429.9,857.7 L1432.4,850.9 L1437.9,846.8 L1448.6,847.5 L1462.4,850.9 L1475.4,853.0 L1486.2,851.9 L1496.3,849.6 L1505.7,848.6 L1515.0,850.5 L1523.7,853.7 L1530.7,855.7 L1535.3,855.2 L1538.2,853.5 L1540.0,852.1 M1413.1,1000.5 L1412.9,998.3 L1412.5,995.2 L1411.1,991.4 L1408.1,987.1 L1404.3,982.1 L1400.4,977.1 L1396.5,972.4 L1392.6,967.6 L1389.6,962.9 L1388.1,958.2 L1387.5,953.6 L1387.9,948.6 L1389.6,942.8 L1392.3,936.7 L1395.0,930.7 L1397.0,925.4 L1399.0,920.2 L1402.1,914.6 L1406.6,907.0 L1412.3,899.0 L1420.0,895.0 L1430.7,897.6 L1443.4,904.3 L1455.7,911.1 L1467.0,916.5 L1477.8,922.1 L1487.9,928.9 L1497.3,938.5 L1506.0,949.3 L1512.9,957.5 L1517.6,960.2 L1520.5,960.3 L1521.8,962.9 L1520.3,970.6 L1517.3,980.7 L1516.4,989.6 L1519.9,996.3 L1525.6,1001.7 L1530.7,1005.7 L1534.5,1008.0 L1537.8,1008.8 L1540.0,1009.3 M1421.3,1000.5 L1419.8,991.5 L1417.8,979.2 L1417.3,971.8 L1419.5,973.3 L1423.2,979.6 L1427.1,986.1 L1431.0,991.0 L1435.1,996.1 L1439.6,1002.1 L1444.7,1010.4 L1450.1,1019.7 L1455.7,1027.1 L1462.3,1031.1 L1469.1,1033.3 L1473.6,1036.1 L1473.6,1040.8 L1471.2,1046.2 L1470.0,1050.4 L1472.2,1052.1 L1475.6,1052.6 L1477.1,1053.9 L1475.1,1056.9 L1471.3,1060.7 L1468.2,1064.6 L1467.9,1068.5 L1468.3,1072.6 L1466.4,1077.1 L1459.6,1082.6 L1450.3,1088.4 L1443.2,1093.2 L1440.4,1096.4 L1439.8,1098.6 L1439.6,1100.0 M1401.2,955.7 L1404.8,957.5 M1505.7,1100.0 L1510.4,1086.5 L1517.1,1067.8 L1523.6,1052.1 L1529.8,1042.8 L1535.8,1036.5 L1540.0,1032.5 M1540.0,853.0 L1546.7,851.4 L1555.9,849.2 L1563.2,846.8 L1566.7,844.9 L1568.1,843.0 L1568.6,839.6 L1567.9,833.3 L1566.3,825.6 L1565.0,820.0 M1540.0,1008.9 L1540.9,1011.3 L1542.2,1014.7 L1543.0,1018.0 L1543.0,1020.9 L1542.5,1023.6 L1542.0,1026.1 L1541.3,1028.6 L1540.5,1030.9 L1540.0,1032.5 M1572.1,893.2 L1573.7,888.8 L1576.1,882.5 L1579.3,875.4 L1583.7,867.0 L1588.8,857.9 L1593.6,850.4 L1597.7,845.7 L1601.5,842.6 L1604.3,839.6 L1605.4,836.4 L1605.5,833.4 L1606.1,830.7 L1607.7,828.3 L1609.6,826.2 L1611.4,825.4 L1612.4,826.1 L1613.1,828.0 L1615.0,830.7 L1619.8,834.6 L1625.8,839.2 L1629.3,843.2 L1628.0,845.9 L1624.2,847.9 L1620.4,850.4 L1617.3,853.6 L1614.3,857.2 L1611.4,861.1 L1609.0,865.4 L1606.9,870.0 L1604.3,873.6 L1601.4,875.0 L1598.1,875.4 L1593.6,877.1 L1586.4,882.2 L1578.1,888.6 L1572.1,893.2 M1553.4,921.8 L1554.5,920.0 L1556.0,917.5 L1557.9,915.5 L1560.2,914.6 L1562.9,914.2 L1565.0,914.6 L1566.3,916.3 L1567.1,918.7 L1566.8,920.9 L1565.0,922.8 L1562.3,924.5 L1559.6,925.4 L1557.3,924.6 L1555.0,923.0 L1553.4,921.8 M1541.8,948.6 L1544.1,945.0 L1547.4,940.0 L1550.7,936.1 L1553.7,933.8 L1556.7,932.6 L1559.6,932.5 L1563.4,933.7 L1567.2,936.1 L1568.6,939.6 L1566.1,945.8 L1561.2,953.1 L1556.1,957.5 L1550.9,956.2 L1545.6,951.9 L1541.8,948.6 M1604.3,948.6 L1606.3,948.1 L1609.2,947.6 L1611.4,947.7 L1612.7,948.3 L1613.3,949.6 L1613.2,952.1 L1611.9,957.4 L1609.8,964.0 L1607.9,968.2 L1606.4,968.3 L1605.1,966.1 L1604.3,962.9 L1604.0,958.2 L1604.2,952.6 L1604.3,948.6 M1661.4,820.0 L1660.3,824.3 L1658.6,830.4 L1656.1,836.1 L1651.9,840.6 L1646.9,844.8 L1643.6,848.6 L1643.6,851.6 L1645.3,854.3 L1645.4,857.5 L1641.5,861.8 L1636.0,866.7 L1632.9,871.8 L1634.8,877.2 L1639.1,882.8 L1641.8,887.9 L1641.5,891.8 L1639.5,895.1 L1636.4,898.6 L1632.1,901.9 L1626.5,905.4 L1620.4,911.1 L1612.9,920.8 L1604.9,932.7 L1598.9,943.2 L1596.7,950.8 L1596.4,956.9 L1595.4,962.9 L1592.4,967.9 L1588.7,972.8 L1584.6,980.7 L1580.0,993.5 L1575.0,1009.2 L1570.4,1025.4 L1566.7,1042.0 L1563.5,1059.0 L1559.6,1073.6 L1554.1,1085.0 L1547.9,1094.0 L1543.6,1100.0 M1686.4,820.0 L1687.6,822.8 L1689.0,826.9 L1688.2,830.7 L1683.1,833.6 L1675.7,836.2 L1670.4,839.6 L1669.6,844.6 L1670.9,850.4 L1670.4,855.7 L1665.5,860.2 L1658.9,864.3 L1654.3,868.2 L1653.9,871.7 L1655.5,875.0 L1656.1,878.9 L1654.2,883.7 L1651.4,889.0 L1648.9,895.0 L1647.3,901.9 L1646.0,909.5 L1645.4,916.4 L1645.7,922.5 L1646.6,928.0 L1647.1,932.5 L1647.4,935.5 L1647.3,937.5 L1645.4,939.6 L1640.0,942.3 L1632.9,945.1 L1627.5,948.6 L1626.2,952.7 L1626.8,957.4 L1625.7,962.9 L1620.8,970.1 L1614.3,978.2 L1609.6,984.3 L1608.7,986.4 L1609.6,986.5 L1609.6,987.9 L1607.3,991.9 L1604.2,997.1 L1602.5,1002.1 L1603.4,1006.7 L1605.7,1011.1 L1607.9,1014.6 L1609.4,1016.6 L1610.8,1017.8 L1611.4,1020.0 L1611.0,1024.0 L1609.7,1028.9 L1607.9,1034.3 L1605.1,1039.6 L1601.8,1045.3 L1598.9,1052.1 L1596.9,1061.2 L1595.2,1071.5 L1593.6,1080.7 L1591.6,1088.5 L1589.6,1095.3 L1588.2,1100.0 M1711.4,820.0 L1710.8,822.4 L1709.7,826.0 L1707.9,830.7 L1705.3,837.0 L1702.0,844.5 L1697.1,852.1 L1688.9,859.7 L1679.2,867.6 L1672.1,875.4 L1670.6,883.4 L1671.7,891.4 L1672.1,898.6 L1670.0,904.0 L1667.0,908.6 L1665.0,914.6 L1665.7,924.1 L1667.4,934.9 L1666.8,943.2 L1661.6,946.6 L1654.1,947.4 L1647.1,948.6 L1641.1,951.1 L1635.6,954.0 L1632.9,957.5 L1635.5,962.3 L1640.9,967.6 L1643.6,971.8 L1640.3,972.9 L1634.2,972.8 L1629.3,975.4 L1627.4,982.8 L1626.8,992.8 L1625.7,1002.1 L1623.5,1009.4 L1620.8,1016.1 L1618.6,1023.6 L1617.2,1033.0 L1616.2,1043.1 L1615.0,1052.1 L1613.1,1058.4 L1611.0,1063.5 L1609.6,1070.0 L1609.8,1080.2 L1610.7,1091.8 L1611.4,1100.0 M1736.4,820.0 L1733.8,823.5 L1730.5,828.4 L1729.3,832.5 L1731.8,835.2 L1736.5,837.1 L1741.8,837.9 L1747.8,836.5 L1754.4,833.9 L1759.6,832.5 L1762.9,833.4 L1764.9,835.4 L1765.0,837.9 L1762.6,840.8 L1758.5,844.2 L1754.3,846.8 L1750.4,847.4 L1746.6,847.3 L1743.6,848.6 L1742.2,852.7 L1741.6,858.3 L1740.0,862.9 L1736.2,866.0 L1731.5,868.2 L1727.5,868.2 L1725.2,864.4 L1723.7,858.5 L1722.1,853.9 L1720.9,851.8 L1719.6,851.1 L1716.8,852.1 L1710.8,855.7 L1703.2,861.1 L1697.1,866.4 L1694.0,871.0 L1692.5,875.6 L1691.8,880.7 L1692.4,886.7 L1693.8,893.2 L1693.6,900.4 L1689.8,908.6 L1684.4,917.4 L1681.1,925.4 L1682.1,932.3 L1685.0,938.5 L1686.4,943.2 L1684.3,945.9 L1680.6,947.1 L1677.5,948.6 L1676.6,951.0 L1676.4,953.5 L1673.9,955.7 L1666.4,956.6 L1656.7,957.2 L1650.7,959.3 L1653.2,963.6 L1659.5,969.5 L1661.4,977.1 L1653.7,988.1 L1641.6,1000.8 L1632.9,1011.1 L1631.6,1016.9 L1633.7,1020.3 L1634.6,1023.6 L1631.7,1027.1 L1627.6,1030.4 L1625.7,1034.3 L1628.6,1039.6 L1633.6,1045.5 L1636.4,1050.4 L1634.7,1052.9 L1630.8,1054.4 L1627.5,1057.5 L1625.6,1063.6 L1624.4,1071.3 L1623.9,1078.9 L1624.7,1086.8 L1626.3,1094.6 L1627.5,1100.0 M1772.1,820.0 L1776.8,825.3 L1783.1,832.8 L1786.4,839.6 L1783.8,845.0 L1778.3,849.8 L1773.9,853.9 L1773.1,857.4 L1773.5,860.2 L1772.1,862.9 L1767.5,865.0 L1761.1,867.0 L1754.3,870.0 L1747.3,875.4 L1739.9,881.8 L1732.9,886.1 L1726.0,885.9 L1719.5,883.5 L1715.0,882.5 L1713.4,884.5 L1713.8,887.9 L1715.0,891.4 L1717.5,894.7 L1720.8,898.2 L1722.1,902.1 L1720.2,906.9 L1716.2,912.1 L1711.4,916.4 L1705.3,919.3 L1698.3,921.5 L1693.6,923.6 L1692.5,926.0 L1693.6,928.3 L1695.4,930.7 L1697.9,933.0 L1701.0,935.2 L1702.5,937.9 L1701.3,941.1 L1698.5,944.7 L1695.4,948.6 L1692.2,952.8 L1688.7,957.2 L1684.6,961.1 L1678.8,963.5 L1672.4,965.2 L1668.6,968.2 L1669.8,973.2 L1673.5,979.5 L1675.7,986.1 L1674.7,993.5 L1672.1,1001.3 L1668.6,1007.5 L1663.2,1010.5 L1656.9,1012.0 L1652.5,1014.6 L1652.3,1020.3 L1654.1,1027.2 L1654.3,1032.5 L1650.6,1034.4 L1645.3,1034.6 L1641.8,1036.1 L1642.2,1039.5 L1644.4,1044.1 L1645.4,1050.4 L1643.4,1059.1 L1640.2,1069.4 L1638.2,1078.9 L1638.7,1087.3 L1640.5,1094.8 L1641.8,1100.0 M1804.3,820.0 L1803.5,828.1 L1802.3,839.3 L1800.7,848.6 L1798.9,853.4 L1796.6,856.2 L1793.6,859.3 L1789.2,863.7 L1784.0,868.2 L1779.3,871.8 L1775.6,873.3 L1772.3,873.8 L1768.6,875.4 L1763.9,879.0 L1758.9,883.6 L1754.3,887.9 L1750.4,891.4 L1747.0,894.6 L1743.6,896.8 L1739.4,896.9 L1735.2,895.9 L1732.9,896.8 L1734.0,901.3 L1736.9,907.7 L1738.2,912.9 L1736.0,915.3 L1732.1,916.6 L1729.3,918.2 L1729.0,921.1 L1729.6,924.3 L1729.3,927.1 L1726.7,928.6 L1723.1,929.7 L1720.4,932.5 L1719.7,939.0 L1719.8,947.2 L1718.6,953.9 L1714.6,957.3 L1709.2,959.1 L1704.3,961.1 L1700.3,963.7 L1696.7,966.6 L1693.6,970.0 L1690.5,974.4 L1687.9,979.3 L1686.4,984.3 L1687.4,988.7 L1689.5,993.1 L1690.0,998.6 L1687.6,1006.0 L1683.7,1014.5 L1679.3,1021.8 L1674.5,1026.5 L1669.4,1030.1 L1665.0,1034.3 L1661.7,1039.8 L1659.2,1046.0 L1657.9,1052.1 L1658.8,1058.1 L1660.9,1064.0 L1661.4,1070.0 L1658.6,1076.2 L1654.2,1082.3 L1650.7,1087.9 L1649.4,1092.8 L1649.1,1097.1 L1648.9,1100.0 M1266.8,1248.2 L1273.0,1249.1 M1240.0,1214.3 L1244.4,1212.0 L1250.7,1208.9 L1257.9,1207.1 L1265.9,1208.6 L1274.8,1211.5 L1282.9,1212.5 L1290.0,1209.5 L1296.2,1204.7 L1300.5,1201.1 M1429.9,1128.4 L1431.2,1127.5 L1433.0,1126.0 L1434.6,1123.2 L1436.0,1118.3 L1437.2,1112.2 L1438.2,1107.1 L1439.0,1103.8 L1439.6,1101.5 L1440.0,1100.0 M1240.0,1257.1 L1247.8,1258.9 L1258.8,1261.3 L1268.6,1262.5 L1275.7,1262.0 L1281.7,1260.3 L1286.4,1257.1 L1288.9,1251.8 L1290.3,1245.0 L1293.6,1239.3 L1300.6,1235.5 L1309.7,1232.7 L1318.6,1230.4 L1326.6,1228.5 L1334.4,1227.1 L1341.8,1225.0 L1347.9,1221.7 L1353.7,1217.9 L1361.4,1214.3 L1373.9,1210.9 L1388.3,1207.8 L1398.9,1206.3 L1402.5,1207.5 L1402.3,1210.4 L1402.5,1212.5 L1404.9,1213.4 L1407.7,1213.5 L1409.6,1212.5 L1410.1,1209.3 L1409.9,1205.0 L1409.6,1201.8 L1409.8,1200.8 L1410.1,1200.9 L1410.3,1201.1 M1429.9,1182.3 L1429.9,1182.3 L1430.0,1182.1 L1431.1,1181.3 L1433.9,1179.0 L1437.7,1176.1 L1440.5,1174.0 M1499.9,1100.5 L1500.0,1100.0 M1240.0,1282.1 L1247.5,1283.6 L1258.1,1285.6 L1266.8,1286.6 L1271.5,1285.4 L1274.4,1283.2 L1277.5,1282.1 L1281.8,1283.0 L1286.3,1285.0 L1290.0,1287.5 L1292.6,1290.7 L1294.4,1294.6 L1295.4,1298.2 L1294.9,1301.3 L1293.6,1304.2 L1293.6,1307.1 L1295.7,1310.5 L1299.0,1313.9 L1302.5,1316.1 L1306.4,1316.7 L1310.5,1316.1 L1313.2,1314.3 L1313.9,1310.8 L1313.3,1306.1 L1311.4,1301.8 L1307.4,1298.5 L1302.2,1295.6 L1298.9,1292.9 L1299.0,1290.3 L1301.0,1287.9 L1304.3,1285.7 L1309.0,1284.0 L1315.0,1282.5 L1320.4,1280.4 L1324.1,1276.5 L1327.3,1272.1 L1331.1,1269.6 L1336.9,1270.9 L1343.3,1274.1 L1347.1,1276.8 L1346.4,1277.4 L1343.1,1277.5 L1340.0,1278.6 L1337.5,1281.6 L1335.2,1285.6 L1334.6,1289.3 L1336.6,1292.3 L1340.3,1294.9 L1345.4,1296.4 L1352.6,1295.9 L1361.3,1294.3 L1368.6,1293.8 L1372.8,1295.6 L1375.6,1298.4 L1379.3,1300.0 L1385.5,1299.6 L1392.5,1297.9 L1397.1,1294.6 L1397.1,1288.8 L1394.8,1281.4 L1393.6,1275.0 L1395.0,1270.4 L1397.7,1266.9 L1400.7,1264.3 L1403.9,1263.8 L1407.5,1264.2 L1411.4,1262.5 L1415.9,1256.3 L1420.8,1248.0 L1425.7,1241.1 L1431.0,1237.0 L1436.3,1234.4 L1440.0,1232.7 L1441.2,1231.9 L1440.9,1232.1 L1440.5,1232.3 M1543.0,1100.5 L1543.0,1100.0 M1240.0,1314.3 L1242.4,1313.6 L1246.0,1313.0 L1250.7,1314.3 L1257.1,1319.2 L1264.7,1326.1 L1272.1,1332.1 L1278.8,1336.5 L1285.3,1340.1 L1291.8,1342.9 L1297.7,1344.7 L1303.7,1345.8 L1311.4,1346.4 L1322.9,1346.5 L1336.1,1346.0 L1347.1,1345.5 L1354.2,1345.7 L1359.0,1345.8 L1363.2,1344.6 L1367.2,1340.6 L1370.7,1335.3 L1373.9,1332.1 L1376.8,1333.6 L1379.4,1337.2 L1382.9,1339.3 L1387.6,1338.2 L1393.0,1335.4 L1398.9,1332.1 L1405.0,1328.4 L1411.5,1324.0 L1418.6,1319.6 L1427.2,1315.5 L1436.4,1311.3 L1443.6,1307.1 L1447.1,1303.3 L1448.6,1299.5 L1450.7,1294.6 L1454.9,1287.9 L1459.6,1280.1 L1463.2,1273.2 L1464.8,1267.7 L1465.3,1263.1 L1465.5,1260.0 M1240.0,1346.4 L1242.4,1349.1 L1246.3,1352.9 L1252.5,1357.1 L1263.2,1361.9 L1276.3,1367.0 L1286.4,1371.4 L1291.1,1375.0 L1292.7,1378.0 L1293.6,1380.0 M1473.8,1260.0 L1474.1,1267.2 L1474.6,1277.4 L1475.7,1287.5 L1478.0,1296.9 L1480.9,1306.3 L1482.9,1314.3 L1483.3,1320.4 L1482.8,1325.1 L1481.1,1328.6 L1477.4,1330.3 L1472.6,1330.8 L1468.6,1332.1 L1465.9,1335.3 L1464.1,1339.2 L1463.2,1342.9 L1464.9,1345.5 L1467.6,1347.9 L1466.8,1351.8 L1458.7,1358.5 L1446.9,1366.7 L1438.2,1373.2 L1435.6,1376.8 L1435.9,1378.8 L1436.4,1380.0 M1482.9,1260.0 L1481.4,1264.2 L1479.6,1270.4 L1479.3,1278.6 L1482.1,1289.9 L1486.4,1303.1 L1490.0,1314.3 L1492.5,1321.7 L1494.2,1327.1 L1493.6,1332.1 L1488.3,1337.2 L1480.7,1341.9 L1475.7,1346.4 L1476.3,1350.4 L1479.5,1354.2 L1481.1,1358.9 L1478.8,1366.1 L1475.0,1374.2 L1472.1,1380.0 M1494.1,1260.0 L1492.6,1265.4 L1490.7,1273.2 L1490.0,1282.1 L1491.7,1292.4 L1494.6,1303.9 L1497.1,1314.3 L1499.1,1323.1 L1500.7,1330.9 L1500.7,1337.5 L1498.1,1341.8 L1493.8,1344.9 L1490.0,1350.0 L1487.1,1359.8 L1484.6,1371.6 L1482.9,1380.0 M1504.3,1260.0 L1503.8,1263.7 L1503.0,1269.0 L1502.5,1275.0 L1502.0,1281.1 L1501.6,1288.0 L1502.5,1296.4 L1505.5,1307.9 L1509.8,1321.0 L1513.2,1332.1 L1515.6,1339.6 L1517.2,1345.0 L1516.8,1350.0 L1513.0,1355.0 L1507.3,1359.6 L1502.5,1364.3 L1499.9,1370.0 L1498.2,1375.9 L1497.1,1380.0 M1505.3,1100.0 L1505.4,1103.1 L1505.2,1107.6 L1503.3,1112.2 L1497.7,1117.2 L1490.4,1122.4 L1484.9,1126.5 L1483.6,1128.5 L1484.1,1129.4 L1482.9,1130.6 L1477.8,1132.6 L1471.0,1135.0 L1465.5,1137.8 L1462.3,1141.4 L1460.4,1145.5 L1459.4,1149.0 L1460.0,1151.1 L1461.4,1152.6 L1461.4,1155.1 L1458.6,1159.5 L1454.4,1164.8 L1450.2,1169.4 L1446.3,1172.9 L1442.6,1175.7 L1440.0,1177.6 M1440.0,1232.7 L1446.1,1228.7 L1454.4,1223.0 L1460.4,1217.3 L1461.6,1212.3 L1460.4,1207.3 L1459.4,1202.0 L1459.3,1196.3 L1459.5,1190.2 L1460.4,1184.7 L1462.9,1180.1 L1466.3,1175.9 L1468.6,1171.4 L1468.6,1165.8 L1467.6,1159.9 L1467.6,1155.1 L1469.4,1152.3 L1472.2,1150.6 L1474.7,1149.0 L1475.8,1147.1 L1476.6,1145.1 L1478.8,1142.9 L1483.9,1139.9 L1490.3,1136.7 L1495.1,1133.7 L1495.7,1131.0 L1494.5,1128.5 L1496.1,1126.5 L1503.0,1125.4 L1512.7,1124.7 L1521.6,1123.5 L1529.2,1121.4 L1536.1,1118.7 L1541.0,1115.3 L1543.1,1110.2 L1543.2,1104.2 L1543.1,1100.0 M1465.5,1260.0 L1468.2,1253.3 L1471.9,1243.9 L1473.7,1234.7 L1471.9,1226.9 L1468.2,1219.5 L1465.5,1212.2 L1464.6,1205.1 L1464.6,1198.3 L1465.5,1191.8 L1467.9,1186.2 L1471.1,1181.0 L1473.7,1175.5 L1474.7,1169.2 L1475.0,1162.7 L1475.7,1157.1 L1477.1,1152.9 L1478.8,1149.5 L1480.8,1146.9 L1483.5,1145.2 L1486.5,1144.3 L1489.0,1143.9 L1490.2,1144.4 L1490.8,1145.3 L1492.0,1144.9 L1494.5,1141.5 L1497.5,1136.7 L1500.2,1133.7 L1501.5,1134.2 L1502.5,1136.4 L1505.3,1137.8 L1511.7,1137.3 L1519.8,1136.1 L1526.7,1134.7 L1530.9,1133.2 L1533.7,1131.6 L1536.9,1130.6 L1541.3,1130.8 L1545.9,1131.5 L1550.2,1131.6 L1554.1,1130.5 L1557.6,1128.8 L1560.0,1127.6 M1473.7,1260.0 L1474.0,1257.0 L1474.6,1252.6 L1475.7,1248.0 L1478.1,1243.3 L1481.0,1238.3 L1482.9,1233.7 L1483.0,1229.7 L1482.1,1226.0 L1480.8,1222.4 L1478.9,1219.2 L1476.6,1216.0 L1474.7,1212.2 L1473.5,1207.3 L1472.8,1201.9 L1472.7,1196.9 L1473.1,1193.2 L1474.2,1190.0 L1475.7,1186.7 L1478.1,1183.2 L1481.0,1179.5 L1482.9,1175.5 L1482.5,1170.8 L1481.2,1165.7 L1480.8,1161.2 L1482.5,1157.4 L1485.2,1154.2 L1488.0,1152.0 L1490.4,1151.7 L1492.8,1152.6 L1495.1,1153.1 L1497.1,1152.5 L1498.9,1151.6 L1501.2,1151.0 L1504.6,1151.4 L1508.4,1152.1 L1511.4,1152.0 L1512.3,1150.5 L1512.3,1148.2 L1514.5,1145.9 L1521.1,1143.5 L1529.9,1141.2 L1536.9,1139.8 L1540.1,1140.6 L1541.6,1142.3 L1544.1,1142.9 L1549.3,1140.7 L1555.5,1137.2 L1560.0,1134.7 M1482.9,1260.0 L1484.1,1258.8 L1485.8,1257.0 L1486.9,1255.1 L1486.5,1253.5 L1485.5,1251.8 L1485.9,1249.0 L1489.5,1243.9 L1494.6,1237.6 L1498.2,1232.7 L1499.0,1230.5 L1498.2,1229.6 L1496.1,1227.6 L1492.1,1223.2 L1486.9,1217.7 L1482.9,1212.2 L1481.0,1207.2 L1480.4,1202.2 L1480.8,1196.9 L1482.7,1191.3 L1485.7,1185.5 L1488.0,1179.6 L1488.4,1173.0 L1488.1,1166.3 L1489.0,1161.2 L1491.7,1159.1 L1495.5,1158.6 L1500.2,1158.2 L1506.7,1157.1 L1514.1,1156.0 L1519.6,1155.1 L1520.2,1154.6 L1518.9,1154.2 L1521.6,1153.1 L1533.2,1150.5 L1548.7,1147.2 L1560.0,1144.9 M1494.1,1260.0 L1494.3,1256.1 L1494.8,1250.6 L1496.1,1245.9 L1498.9,1243.0 L1502.5,1240.8 L1505.3,1238.8 L1507.0,1236.9 L1507.8,1235.1 L1507.3,1232.7 L1504.8,1228.8 L1500.8,1224.3 L1497.1,1220.4 L1494.0,1218.1 L1491.1,1216.6 L1489.0,1214.3 L1487.8,1210.8 L1487.4,1206.6 L1488.0,1202.0 L1489.8,1197.3 L1492.6,1192.3 L1495.1,1186.7 L1496.6,1180.0 L1497.7,1172.8 L1499.2,1167.3 L1501.1,1165.0 L1503.4,1164.5 L1506.3,1164.3 L1509.4,1164.3 L1513.2,1164.6 L1519.6,1164.3 L1531.3,1162.5 L1545.7,1160.1 L1556.3,1158.2 L1560.1,1157.1 L1560.3,1156.5 L1560.0,1156.1 M1504.3,1260.0 L1504.4,1258.0 L1504.6,1255.0 L1505.3,1251.0 L1507.3,1245.2 L1509.8,1238.4 L1511.4,1232.7 L1511.5,1229.2 L1510.7,1226.9 L1509.4,1224.5 L1507.4,1221.7 L1505.0,1218.7 L1503.3,1215.3 L1502.6,1211.3 L1502.6,1206.8 L1503.3,1202.0 L1504.9,1196.7 L1507.3,1191.2 L1509.4,1186.7 L1510.7,1183.9 L1511.9,1182.0 L1513.5,1180.6 L1515.6,1179.6 L1518.2,1179.0 L1521.6,1178.6 L1526.6,1178.3 L1532.4,1178.2 L1536.9,1177.6 L1538.6,1175.9 L1539.0,1173.7 L1541.0,1171.4 L1546.9,1168.9 L1554.5,1166.2 L1560.0,1164.3 M1174.4,1380.0 L1183.2,1387.9 L1195.4,1399.1 L1205.4,1409.3 L1210.7,1417.2 L1213.9,1424.1 L1217.5,1429.9 L1222.8,1434.1 L1228.5,1437.1 L1233.0,1440.3 L1235.4,1444.3 L1236.7,1448.6 L1238.1,1452.3 L1240.5,1454.7 L1243.1,1456.5 L1245.0,1459.2 L1245.5,1464.1 L1245.5,1470.0 L1246.8,1474.7 L1250.6,1477.2 L1255.9,1478.5 L1260.5,1479.9 L1263.1,1481.0 L1265.2,1482.0 L1269.1,1485.0 L1276.8,1491.2 L1286.4,1499.2 L1295.0,1507.4 L1301.7,1516.0 L1307.4,1524.7 L1312.2,1531.5 L1315.6,1534.7 L1318.0,1535.9 L1320.8,1538.4 L1324.6,1544.5 L1328.8,1552.0 L1332.9,1557.4 L1336.5,1558.8 L1339.9,1558.2 L1343.2,1557.4 L1345.5,1556.3 L1347.7,1555.1 L1351.8,1555.6 L1359.3,1559.7 L1368.8,1565.4 L1377.6,1569.4 L1385.5,1569.8 L1392.7,1568.5 L1398.3,1567.7 L1401.2,1568.0 L1402.4,1568.9 L1403.5,1571.1 L1404.5,1576.1 L1405.4,1582.4 L1406.9,1586.6 L1409.9,1587.4 L1413.5,1586.1 L1415.5,1583.2 L1414.5,1578.1 L1411.9,1571.5 L1410.3,1566.0 L1409.8,1563.1 L1410.1,1561.4 L1413.8,1559.1 L1423.5,1554.8 L1436.6,1550.0 L1446.5,1547.0 L1450.2,1547.9 L1450.8,1550.7 L1451.7,1552.2 L1454.0,1551.0 L1456.6,1548.6 L1458.6,1545.3 L1459.7,1541.0 L1460.3,1535.9 L1460.3,1531.5 L1459.3,1529.7 L1457.8,1528.6 L1456.8,1524.6 L1457.3,1515.5 L1458.4,1503.5 L1458.6,1491.9 L1456.6,1481.2 L1453.6,1470.9 L1451.7,1462.7 L1451.3,1458.1 L1451.9,1455.6 L1453.4,1452.3 L1456.2,1447.2 L1460.0,1441.4 L1463.7,1435.1 L1467.5,1428.3 L1471.4,1421.2 L1474.1,1414.4 L1474.7,1408.4 L1474.2,1402.8 L1474.1,1397.2 L1475.1,1390.8 L1476.5,1384.5 L1477.5,1380.0 M1200.3,1380.0 L1206.7,1385.4 L1216.0,1393.1 L1226.1,1400.7 L1237.0,1407.2 L1248.7,1413.6 L1258.8,1419.6 L1266.3,1424.7 L1272.2,1429.4 L1277.8,1435.1 L1283.6,1443.1 L1289.1,1452.1 L1293.3,1459.2 L1294.7,1462.8 L1294.7,1464.4 L1296.7,1466.1 L1302.5,1468.1 L1310.2,1470.2 L1317.4,1473.0 L1323.1,1477.2 L1328.3,1482.2 L1332.9,1486.8 L1336.4,1490.7 L1339.4,1494.3 L1343.2,1497.1 L1348.3,1498.9 L1354.2,1499.9 L1360.4,1500.5 L1366.8,1501.0 L1373.7,1501.0 L1381.1,1500.5 L1389.3,1499.3 L1398.1,1497.4 L1406.9,1495.4 L1416.1,1493.3 L1425.4,1491.0 L1432.7,1488.5 L1437.4,1485.7 L1440.1,1482.7 L1441.3,1479.9 L1440.4,1477.6 L1438.0,1475.5 L1436.2,1473.0 L1435.3,1469.9 L1435.1,1466.5 L1436.2,1462.7 L1439.7,1458.1 L1444.5,1453.1 L1448.2,1448.9 L1449.2,1446.3 L1449.1,1444.4 L1449.9,1442.0 L1453.1,1438.5 L1457.3,1434.4 L1460.3,1429.9 L1460.8,1424.6 L1460.1,1419.0 L1460.3,1414.4 L1462.1,1411.7 L1464.7,1410.1 L1467.2,1409.3 L1469.3,1410.5 L1471.2,1412.6 L1472.3,1411.0 L1472.2,1401.9 L1471.3,1389.2 L1470.6,1380.0 M1243.3,1380.0 L1257.6,1388.3 L1277.6,1399.8 L1295.0,1409.3 L1305.7,1414.3 L1313.8,1417.2 L1322.5,1419.6 L1333.6,1421.6 L1345.3,1423.1 L1355.2,1424.8 L1362.4,1426.7 L1367.9,1428.8 L1372.5,1431.7 L1376.2,1436.0 L1378.9,1441.1 L1381.1,1445.4 L1381.6,1448.7 L1381.5,1451.3 L1384.5,1452.3 L1393.7,1451.2 L1405.9,1448.5 L1415.5,1445.4 L1419.1,1442.6 L1420.1,1439.4 L1422.4,1435.1 L1428.3,1428.5 L1435.6,1420.8 L1441.3,1414.4 L1443.6,1410.8 L1444.4,1408.5 L1446.5,1405.8 L1451.9,1402.1 L1458.6,1398.0 L1463.7,1393.8 L1466.0,1388.8 L1466.8,1383.6 L1467.2,1380.0 M1295.0,1380.0 L1312.5,1381.8 L1336.7,1384.5 L1355.2,1386.9 L1361.5,1388.8 L1362.0,1390.5 L1363.8,1392.1 L1370.4,1393.3 L1378.3,1394.4 L1384.5,1395.5 L1387.3,1397.0 L1388.3,1398.4 L1389.7,1398.9 L1392.0,1397.7 L1394.7,1395.4 L1398.3,1393.8 L1403.6,1393.7 L1410.0,1394.2 L1415.5,1393.8 L1419.5,1391.4 L1422.6,1388.0 L1425.8,1385.2 L1429.6,1383.6 L1433.4,1382.6 L1436.2,1381.7 L1437.4,1381.0 L1437.8,1380.4 L1437.9,1380.0 M1331.1,1543.6 L1332.5,1542.7 L1334.4,1541.6 L1336.3,1541.0 L1338.1,1541.4 L1339.8,1542.3 L1340.6,1543.6 L1339.8,1545.5 L1338.1,1547.7 L1336.3,1548.7 L1334.4,1547.6 L1332.5,1545.3 L1331.1,1543.6 M1402.0,820.0 L1403.2,812.0 L1404.9,800.7 L1405.7,790.0 L1405.2,781.1 L1403.9,772.8 L1402.1,765.0 L1400.1,758.3 L1397.6,752.2 L1395.0,745.4 L1391.9,736.2 L1388.6,726.3 L1386.1,718.6 L1384.5,714.3 L1383.7,712.3 L1384.3,711.4 L1386.9,712.2 L1390.8,714.2 L1395.0,715.0 L1399.2,713.4 L1403.5,710.6 L1407.5,707.9 L1410.2,705.5 L1412.5,703.1 L1416.4,700.7 L1423.4,698.3 L1431.9,696.0 L1439.6,693.6 L1445.7,691.3 L1451.0,689.1 L1455.7,686.4 L1459.7,683.0 L1463.1,679.2 L1466.4,675.7 L1469.9,673.3 L1473.3,671.3 L1477.1,668.6 L1481.7,664.1 L1486.7,658.9 L1491.4,654.3 L1495.5,650.5 L1499.3,647.3 L1503.9,645.4 L1510.1,645.0 L1517.0,645.9 L1523.6,647.1 L1529.9,648.9 L1535.9,651.0 L1540.0,652.5 M1409.5,820.0 L1411.3,814.7 L1413.6,807.0 L1414.6,798.9 L1413.2,790.9 L1410.5,782.4 L1407.5,773.9 L1404.4,765.4 L1401.2,756.9 L1398.6,748.9 L1397.0,741.5 L1396.2,734.6 L1395.9,729.3 L1395.8,726.6 L1396.4,725.6 L1398.6,723.9 L1403.3,720.6 L1409.8,716.7 L1416.4,713.2 L1423.0,710.6 L1429.7,708.3 L1436.1,706.1 L1441.6,703.9 L1446.8,701.7 L1452.1,698.9 L1458.0,694.9 L1464.0,690.3 L1470.0,686.4 L1476.0,683.0 L1481.9,680.3 L1487.9,680.2 L1493.8,684.9 L1499.8,692.3 L1505.7,697.1 L1511.7,697.1 L1517.7,694.5 L1523.6,691.8 L1529.8,689.3 L1535.8,686.6 L1540.0,684.6 M1415.0,820.0 L1417.7,815.7 L1421.4,809.5 L1423.6,802.5 L1422.9,794.7 L1420.8,786.1 L1418.2,777.5 L1415.0,768.3 L1411.5,759.1 L1409.3,752.5 L1409.3,750.1 L1410.7,750.3 L1412.9,750.7 L1416.1,750.7 L1420.1,750.9 L1423.6,750.7 L1425.1,750.0 L1426.0,748.9 L1428.9,747.1 L1435.1,744.5 L1443.3,741.3 L1452.1,738.2 L1461.9,735.4 L1472.2,732.8 L1480.7,731.1 L1485.7,731.2 L1489.0,732.2 L1493.2,732.0 L1499.6,729.6 L1506.9,726.1 L1514.6,722.1 L1523.7,717.2 L1533.3,711.7 L1540.0,707.9 M1422.0,820.0 L1423.4,815.3 L1425.3,808.6 L1426.2,802.5 L1425.2,798.0 L1423.3,794.1 L1421.8,790.0 L1421.1,785.0 L1420.8,779.9 L1421.8,775.7 L1424.6,773.2 L1428.7,771.6 L1432.5,770.4 L1435.3,769.0 L1437.9,767.9 L1441.4,767.7 L1447.1,769.0 L1453.8,771.1 L1459.3,772.1 L1461.1,771.3 L1461.8,769.3 L1466.4,766.8 L1479.3,763.5 L1496.1,759.7 L1509.3,756.1 L1514.9,752.9 L1516.9,749.9 L1520.0,747.1 L1526.7,744.6 L1534.5,742.4 L1540.0,740.9 M1428.0,820.0 L1433.9,817.7 L1442.4,814.4 L1452.1,811.4 L1463.5,809.5 L1476.2,808.0 L1487.9,806.1 L1498.1,803.0 L1507.4,799.5 L1514.6,797.1 L1518.7,797.3 L1520.7,798.6 L1523.6,798.9 L1529.1,796.9 L1535.5,794.0 L1540.0,791.8 M1495.9,681.1 L1496.5,679.5 L1497.4,677.2 L1498.6,675.7 L1500.3,675.4 L1502.4,675.8 L1503.9,676.6 L1504.8,677.9 L1505.2,679.5 L1504.8,681.1 L1503.1,682.6 L1500.7,684.0 L1498.6,684.6 L1497.3,683.8 L1496.5,682.3 L1495.9,681.1 M1540.0,652.5 L1547.3,652.2 L1557.7,651.2 L1568.6,647.1 L1578.9,637.4 L1589.6,624.5 L1600.7,613.2 L1613.0,604.8 L1625.7,598.0 L1636.4,593.6 L1642.8,592.2 L1647.1,593.2 L1654.3,595.4 L1668.0,599.0 L1684.4,603.8 L1697.1,607.9 L1702.1,610.3 L1703.3,612.0 L1706.1,613.2 L1712.6,613.6 L1720.6,613.6 L1729.3,615.0 L1739.1,618.7 L1749.5,623.8 L1757.9,629.3 L1762.9,634.6 L1765.9,640.3 L1768.6,647.1 L1771.5,656.1 L1774.0,666.3 L1775.7,675.7 L1775.8,683.6 L1775.1,690.7 L1775.7,697.1 L1779.4,703.0 L1784.5,708.2 L1788.2,713.2 L1788.7,718.0 L1787.8,722.5 L1788.2,727.5 L1791.1,732.9 L1795.4,738.7 L1800.7,745.4 L1808.3,753.5 L1816.8,762.4 L1822.1,770.4 L1822.0,776.4 L1818.7,781.5 L1815.0,786.4 L1811.2,791.1 L1807.1,795.6 L1804.3,800.7 L1804.0,807.5 L1805.1,814.8 L1806.1,820.0 M1540.0,684.6 L1554.4,681.2 L1574.4,676.4 L1590.0,672.1 L1596.0,669.4 L1597.7,667.3 L1600.7,665.0 L1607.5,662.7 L1615.7,660.2 L1623.9,656.1 L1631.5,648.8 L1639.1,639.9 L1647.1,632.9 L1656.5,629.3 L1666.3,627.5 L1673.9,625.7 L1677.3,622.3 L1678.5,618.8 L1681.1,618.6 L1686.1,623.6 L1692.5,631.8 L1700.7,640.0 L1712.4,647.5 L1725.8,654.9 L1736.4,661.4 L1741.9,666.7 L1744.6,671.0 L1747.1,673.9 L1750.3,674.2 L1753.2,673.1 L1756.1,673.9 L1759.4,678.2 L1762.8,684.5 L1765.0,691.8 L1765.0,700.0 L1763.8,709.2 L1763.2,718.6 L1763.7,728.4 L1764.7,738.5 L1766.8,747.1 L1770.6,753.0 L1775.3,757.5 L1779.3,763.2 L1782.1,771.7 L1784.2,781.3 L1784.6,790.0 L1782.5,796.8 L1778.7,802.7 L1775.7,807.9 L1774.5,812.8 L1774.1,817.1 L1773.9,820.0 M1540.0,707.9 L1543.8,706.8 L1549.7,705.3 L1557.9,704.3 L1570.4,704.5 L1585.2,705.1 L1597.1,704.3 L1602.9,700.5 L1605.7,695.4 L1609.6,691.8 L1617.2,691.8 L1625.9,693.4 L1632.9,693.6 L1635.6,691.1 L1636.6,687.2 L1640.0,682.9 L1648.3,677.4 L1659.0,671.5 L1668.6,668.6 L1675.3,671.5 L1680.7,677.4 L1686.4,681.1 L1693.2,679.6 L1700.1,675.8 L1706.1,673.9 L1710.5,675.6 L1713.9,679.2 L1716.8,682.9 L1718.4,686.0 L1719.5,689.4 L1722.1,693.6 L1728.1,698.7 L1735.6,704.7 L1741.8,711.4 L1745.6,718.9 L1748.1,727.2 L1748.9,736.4 L1747.3,748.0 L1744.2,760.6 L1741.8,770.4 L1740.7,775.3 L1740.3,777.5 L1741.8,779.3 L1746.7,781.1 L1753.4,782.5 L1757.9,784.6 L1758.5,788.3 L1757.0,792.7 L1754.3,797.1 L1750.0,801.4 L1744.5,805.6 L1740.0,809.6 L1737.4,813.6 L1735.7,817.4 L1734.6,820.0 M1540.0,740.9 L1555.5,736.5 L1577.2,730.7 L1595.4,728.4 L1606.2,733.5 L1613.5,742.1 L1618.6,747.1 L1620.7,744.6 L1620.6,738.5 L1622.1,734.6 L1627.3,736.4 L1634.0,740.3 L1640.0,741.8 L1643.8,738.1 L1646.9,732.1 L1650.7,727.5 L1656.4,726.2 L1662.9,726.4 L1668.6,725.7 L1672.4,723.0 L1675.4,719.5 L1679.3,716.8 L1685.1,714.8 L1691.7,713.6 L1697.1,715.0 L1700.8,720.7 L1703.2,729.0 L1704.3,736.4 L1703.0,742.1 L1700.3,747.0 L1698.9,750.7 L1700.6,751.9 L1703.6,751.9 L1706.1,754.3 L1707.0,761.6 L1707.3,771.2 L1707.9,779.3 L1708.6,784.0 L1709.5,787.2 L1711.4,790.0 L1715.9,792.1 L1721.3,793.7 L1723.9,797.1 L1721.2,804.4 L1715.6,813.5 L1711.4,820.0 M1540.0,791.8 L1542.8,792.6 L1546.9,793.2 L1552.5,790.0 L1559.8,778.6 L1568.6,763.3 L1577.5,754.3 L1586.4,757.7 L1595.6,767.2 L1604.3,773.9 L1612.4,774.1 L1620.0,771.4 L1627.5,768.6 L1635.0,765.8 L1642.4,762.8 L1648.9,761.4 L1654.4,762.6 L1659.1,765.4 L1663.2,768.6 L1666.8,772.1 L1669.8,776.1 L1672.1,779.3 L1673.7,780.6 L1674.6,781.1 L1675.7,782.9 L1677.7,786.5 L1679.9,791.3 L1681.1,797.1 L1680.4,805.0 L1678.8,813.8 L1677.5,820.0 M1565.0,820.0 L1566.4,811.2 L1568.4,799.2 L1570.4,790.0 L1572.1,786.5 L1573.9,786.0 L1575.7,786.4 L1577.5,787.6 L1579.3,789.7 L1581.1,791.8 L1582.9,793.4 L1584.8,795.0 L1586.4,797.1 L1587.8,801.0 L1588.9,805.5 L1590.0,807.9 L1590.5,805.9 L1591.1,801.7 L1593.6,798.9 L1599.5,799.5 L1607.3,801.5 L1615.0,802.5 L1622.2,800.9 L1629.2,798.3 L1634.6,797.1 L1637.6,798.5 L1638.9,801.2 L1640.0,804.3 L1641.0,808.3 L1641.8,812.6 L1643.6,815.0 L1647.3,813.2 L1652.1,809.5 L1656.1,807.9 L1658.6,810.9 L1660.3,816.1 L1661.4,820.0 M1560.0,1128.6 L1565.1,1127.4 L1572.2,1125.7 L1577.9,1123.2 L1580.6,1119.4 L1582.0,1114.7 L1583.2,1110.7 L1584.5,1107.8 L1585.7,1105.5 L1586.8,1103.6 L1588.1,1102.0 L1589.4,1100.8 L1590.4,1100.0 M1560.0,1137.5 L1563.8,1135.5 L1569.1,1132.9 L1574.3,1131.2 L1578.7,1132.0 L1582.9,1133.8 L1586.8,1133.9 L1589.9,1131.0 L1592.6,1126.3 L1595.7,1121.4 L1600.0,1116.5 L1604.7,1111.4 L1608.2,1107.1 L1609.7,1104.0 L1609.9,1101.6 L1610.0,1100.0 M1560.0,1144.6 L1564.2,1142.6 L1570.4,1139.9 L1577.9,1138.4 L1587.6,1139.6 L1598.6,1142.0 L1606.4,1142.9 L1608.1,1141.1 L1606.6,1137.8 L1606.4,1133.9 L1609.9,1129.8 L1614.7,1125.0 L1618.9,1119.6 L1622.0,1112.8 L1624.4,1105.3 L1626.1,1100.0 M1560.0,1153.6 L1564.8,1151.2 L1571.5,1148.0 L1577.9,1146.4 L1582.6,1147.8 L1586.9,1150.8 L1592.1,1153.6 L1599.9,1156.4 L1608.7,1159.1 L1615.4,1158.9 L1617.8,1153.6 L1618.1,1145.6 L1618.9,1139.3 L1621.4,1138.1 L1624.6,1138.7 L1627.9,1135.7 L1631.7,1124.9 L1635.7,1110.4 L1638.6,1100.0 M1560.0,1166.1 L1566.1,1162.6 L1574.7,1158.0 L1583.2,1155.4 L1591.0,1156.4 L1598.5,1159.5 L1604.6,1162.5 L1608.4,1165.2 L1610.8,1167.9 L1613.6,1169.6 L1617.7,1170.0 L1622.3,1169.3 L1626.1,1167.9 L1628.1,1165.9 L1629.2,1163.2 L1631.4,1158.9 L1636.0,1152.1 L1641.5,1143.6 L1645.7,1135.7 L1647.2,1129.4 L1647.2,1123.6 L1647.5,1117.9 L1648.7,1111.2 L1650.1,1104.6 L1651.1,1100.0 M1200.0,1030.2 L1203.7,1029.9 L1209.1,1029.2 L1215.4,1027.6 L1222.9,1024.4 L1231.2,1020.2 L1238.6,1016.7 L1244.2,1014.5 L1248.8,1013.0 L1252.7,1012.2 L1255.4,1012.7 L1257.4,1013.9 L1260.4,1014.1 L1265.2,1012.1 L1271.1,1009.1 L1277.2,1007.1 L1283.4,1007.1 L1289.9,1008.0 L1296.4,1008.4 L1303.1,1007.5 L1309.8,1006.0 L1315.7,1004.5 L1321.0,1002.9 L1325.5,1001.2 L1328.6,1000.0 M1200.0,1066.9 L1206.8,1066.2 L1216.4,1065.3 L1225.7,1064.3 L1233.9,1063.1 L1241.8,1061.8 L1248.9,1061.1 L1254.5,1061.2 L1259.3,1061.9 L1264.3,1063.0 L1269.8,1065.0 L1275.5,1067.5 L1281.0,1068.8 L1286.3,1068.3 L1291.5,1066.6 L1296.4,1064.3 L1301.1,1061.4 L1305.4,1057.9 L1309.3,1054.0 L1312.5,1049.3 L1315.3,1044.1 L1318.3,1039.9 L1321.4,1037.1 L1324.6,1035.2 L1328.6,1034.1 L1333.7,1034.0 L1339.6,1034.6 L1345.3,1034.7 L1350.8,1033.9 L1356.2,1032.6 L1360.7,1030.9 L1364.0,1028.9 L1366.5,1026.4 L1368.5,1023.1 L1370.1,1018.3 L1371.4,1012.6 L1372.3,1007.7 L1373.0,1004.3 L1373.4,1001.7 L1373.6,1000.0 M1200.0,1087.4 L1203.1,1086.8 L1207.6,1085.8 L1212.9,1085.5 L1218.6,1086.2 L1225.0,1087.4 L1232.1,1088.7 L1240.5,1090.3 L1249.5,1092.0 L1257.9,1092.6 L1264.3,1091.3 L1270.0,1089.0 L1277.2,1086.2 L1287.6,1083.1 L1299.5,1079.5 L1309.3,1075.9 L1315.0,1072.1 L1318.6,1068.1 L1322.2,1064.3 L1326.2,1060.5 L1330.3,1056.9 L1335.0,1054.0 L1341.2,1052.3 L1348.1,1051.4 L1354.3,1050.1 L1359.2,1048.6 L1363.3,1046.8 L1367.2,1043.7 L1370.7,1038.9 L1373.9,1032.7 L1377.5,1025.7 L1382.0,1016.8 L1386.9,1007.0 L1390.3,1000.0 M1200.0,1104.2 L1205.0,1104.8 L1212.1,1105.8 L1219.3,1106.7 L1225.5,1107.7 L1231.7,1108.6 L1238.6,1109.3 L1246.9,1110.1 L1256.0,1110.6 L1264.3,1109.9 L1271.3,1107.0 L1277.6,1102.9 L1283.6,1099.7 L1289.5,1098.5 L1295.1,1098.3 L1300.3,1097.7 L1304.5,1096.8 L1308.3,1095.5 L1313.2,1092.6 L1319.9,1086.8 L1327.6,1079.4 L1335.0,1073.3 L1341.9,1069.7 L1348.4,1067.4 L1354.3,1065.6 L1359.2,1064.3 L1363.3,1063.4 L1367.2,1061.7 L1370.9,1058.7 L1374.4,1054.8 L1377.5,1050.1 L1379.7,1044.6 L1381.6,1038.4 L1383.9,1032.1 L1387.2,1026.0 L1391.0,1019.9 L1394.2,1014.1 L1396.5,1008.6 L1398.2,1003.5 L1399.3,1000.0 M1200.0,1114.4 L1202.0,1115.3 L1204.8,1116.5 L1207.7,1118.3 L1210.6,1121.3 L1213.7,1124.9 L1216.7,1127.3 L1219.4,1127.4 L1222.1,1126.4 L1225.7,1126.0 L1231.0,1127.4 L1237.2,1129.5 L1243.7,1130.5 L1250.7,1129.9 L1257.9,1128.3 L1264.3,1126.0 L1268.8,1122.8 L1272.4,1119.0 L1277.2,1115.7 L1284.4,1113.6 L1292.8,1112.0 L1300.3,1110.6 L1306.0,1109.6 L1310.8,1108.8 L1315.7,1106.7 L1321.6,1102.1 L1327.7,1096.2 L1332.4,1091.3 L1334.7,1088.3 L1335.6,1086.4 L1337.6,1084.9 L1341.9,1083.8 L1347.3,1083.1 L1351.7,1082.3 L1354.2,1081.3 L1355.8,1080.2 L1358.2,1078.4 L1362.0,1075.8 L1366.6,1072.6 L1371.0,1069.4 L1375.1,1066.6 L1379.0,1063.8 L1382.6,1060.4 L1386.0,1056.0 L1389.2,1050.9 L1391.6,1046.3 L1392.8,1042.4 L1393.3,1039.0 L1394.2,1036.0 L1396.2,1034.0 L1398.6,1032.3 L1400.6,1029.6 L1401.8,1024.6 L1402.6,1018.5 L1403.2,1012.9 L1403.4,1007.8 L1403.3,1003.2 L1403.2,1000.0 M1200.0,1131.2 L1201.9,1133.9 L1204.6,1137.6 L1207.7,1140.2 L1210.8,1140.1 L1214.3,1138.9 L1219.3,1138.9 L1226.1,1142.2 L1234.4,1146.6 L1243.7,1147.9 L1254.7,1143.1 L1266.7,1135.2 L1277.2,1128.6 L1284.3,1125.1 L1290.0,1122.8 L1296.4,1120.9 L1305.5,1119.1 L1315.4,1117.5 L1323.4,1115.7 L1328.5,1113.3 L1331.7,1110.6 L1333.7,1108.0 L1334.4,1105.6 L1333.8,1103.3 L1333.7,1101.6 L1334.4,1100.7 L1335.4,1100.4 L1337.6,1100.3 L1341.5,1100.7 L1346.5,1101.2 L1351.7,1100.3 L1356.9,1097.0 L1362.2,1092.3 L1367.2,1087.4 L1371.7,1082.7 L1376.0,1077.8 L1380.0,1073.3 L1383.8,1069.5 L1387.3,1066.2 L1390.3,1063.0 L1392.6,1060.2 L1394.6,1057.4 L1396.7,1054.0 L1399.7,1049.5 L1403.0,1044.2 L1405.7,1038.6 L1407.6,1032.4 L1408.8,1025.9 L1409.6,1019.3 L1409.9,1012.1 L1409.7,1005.0 L1409.6,1000.0 M1200.0,1156.9 L1204.7,1155.4 L1211.3,1153.4 L1218.0,1153.0 L1224.2,1155.9 L1230.4,1160.4 L1236.0,1163.3 L1240.4,1163.4 L1244.2,1161.9 L1248.9,1159.5 L1254.8,1155.9 L1261.6,1151.4 L1269.4,1146.6 L1278.5,1141.4 L1288.5,1135.8 L1299.0,1131.2 L1310.9,1128.1 L1323.2,1125.8 L1332.4,1123.4 L1336.3,1120.4 L1337.1,1117.3 L1338.9,1114.4 L1343.4,1112.1 L1349.0,1110.1 L1354.3,1108.0 L1358.9,1106.1 L1363.2,1104.1 L1367.2,1101.6 L1370.8,1098.3 L1374.1,1094.3 L1377.5,1090.0 L1381.1,1084.8 L1384.7,1079.2 L1387.7,1074.6 L1389.6,1072.1 L1390.8,1070.6 L1392.9,1068.2 L1396.7,1063.9 L1401.4,1058.7 L1405.7,1052.7 L1409.7,1045.8 L1413.5,1038.1 L1416.0,1030.9 L1416.8,1024.4 L1416.5,1018.3 L1416.0,1012.9 L1415.6,1007.7 L1415.1,1003.1 L1414.7,1000.0 M1200.0,1164.6 L1212.4,1166.4 L1229.8,1168.7 L1245.0,1169.7 L1254.9,1168.9 L1262.7,1166.8 L1270.7,1163.3 L1280.4,1157.3 L1290.3,1149.9 L1299.0,1144.0 L1305.3,1141.4 L1310.3,1140.4 L1315.7,1138.9 L1322.6,1135.8 L1329.9,1132.2 L1336.3,1128.6 L1341.1,1125.1 L1345.0,1121.6 L1349.2,1118.3 L1354.0,1115.7 L1359.2,1113.2 L1364.6,1109.3 L1370.8,1102.7 L1377.3,1094.6 L1382.6,1087.4 L1385.9,1082.0 L1388.0,1077.3 L1390.3,1073.3 L1393.1,1070.2 L1396.0,1067.7 L1399.3,1064.3 L1403.4,1059.7 L1407.8,1054.3 L1412.2,1047.6 L1416.6,1038.7 L1421.0,1028.5 L1423.7,1019.3 L1423.8,1011.5 L1422.4,1004.7 L1421.2,1000.0 M1300.3,1200.0 L1302.6,1199.0 L1306.0,1197.6 L1309.3,1196.7 L1311.9,1197.3 L1314.4,1198.3 L1318.3,1198.0 L1324.5,1195.3 L1332.0,1191.3 L1338.9,1187.7 L1344.3,1185.5 L1349.1,1183.7 L1354.3,1181.3 L1360.5,1178.0 L1367.2,1174.2 L1373.6,1169.7 L1379.6,1164.0 L1385.3,1157.7 L1390.3,1153.0 L1394.2,1151.3 L1397.3,1151.1 L1400.6,1150.4 L1404.2,1149.1 L1407.9,1147.3 L1412.2,1144.0 L1417.7,1137.9 L1423.8,1130.4 L1428.9,1124.7 L1432.2,1123.5 L1434.6,1124.2 L1436.6,1122.2 L1437.8,1114.5 L1438.8,1104.2 L1441.7,1095.2 L1448.8,1089.1 L1457.9,1084.2 L1464.9,1079.7 L1467.8,1075.0 L1468.6,1070.5 L1468.8,1066.9 L1468.3,1064.7 L1467.3,1063.3 L1467.5,1061.7 L1470.3,1059.2 L1474.2,1056.3 L1476.5,1054.0 L1475.1,1053.3 L1472.0,1053.2 L1470.0,1051.4 L1471.0,1046.4 L1473.2,1039.8 L1473.9,1034.7 L1472.0,1033.1 L1468.7,1033.0 L1464.9,1032.1 L1460.9,1030.0 L1456.5,1027.1 L1452.0,1023.1 L1447.2,1017.3 L1442.4,1010.5 L1439.2,1005.1 L1438.6,1002.3 L1439.6,1000.9 L1440.5,1000.0 M1407.0,1200.0 L1413.3,1194.6 L1421.9,1187.1 L1428.9,1181.3 L1431.5,1179.6 L1432.4,1179.5 L1435.3,1177.5 L1443.0,1171.2 L1452.7,1163.0 L1459.8,1155.6 L1461.6,1150.2 L1460.9,1145.6 L1461.0,1141.4 L1463.3,1137.4 L1466.5,1133.8 L1470.0,1131.2 L1474.2,1130.4 L1478.8,1130.5 L1482.9,1129.9 L1485.8,1127.4 L1488.1,1124.1 L1490.6,1120.9 L1494.0,1117.9 L1497.5,1115.1 L1500.0,1113.2 M1461.0,1200.0 L1461.1,1194.4 L1461.4,1186.7 L1462.3,1180.0 L1464.8,1176.2 L1467.9,1173.4 L1470.0,1169.7 L1470.0,1163.8 L1468.9,1157.0 L1468.8,1151.7 L1470.3,1149.7 L1472.7,1149.3 L1475.2,1147.9 L1477.5,1143.8 L1479.9,1138.8 L1482.9,1135.0 L1487.1,1133.8 L1491.9,1133.8 L1495.8,1133.7 L1498.0,1132.9 L1499.2,1131.9 L1500.0,1131.2 M1468.8,1200.0 L1469.3,1195.9 L1470.2,1190.1 L1471.3,1185.2 L1473.0,1182.6 L1474.9,1180.9 L1476.5,1177.5 L1477.0,1170.3 L1477.2,1161.4 L1477.8,1154.3 L1479.1,1150.8 L1480.9,1149.2 L1482.9,1147.9 L1484.9,1146.4 L1487.1,1145.3 L1489.3,1144.0 L1491.5,1142.4 L1493.8,1140.6 L1495.8,1138.9 L1497.5,1137.0 L1499.0,1135.1 L1500.0,1133.7 M1476.5,1200.0 L1477.5,1196.3 L1478.9,1191.1 L1480.3,1186.5 L1481.8,1183.4 L1483.4,1180.8 L1484.2,1177.5 L1483.6,1172.5 L1482.2,1166.8 L1481.6,1162.0 L1482.2,1158.7 L1483.6,1156.2 L1485.5,1154.3 L1488.2,1153.1 L1491.5,1152.4 L1494.5,1151.7 L1496.8,1150.8 L1498.7,1149.8 L1500.0,1149.2 M1488.0,1200.0 L1489.2,1196.8 L1490.8,1192.1 L1491.9,1186.5 L1491.6,1179.2 L1490.8,1171.0 L1490.6,1164.6 L1491.9,1161.1 L1493.9,1159.3 L1495.8,1158.2 L1497.4,1157.5 L1498.9,1157.5 L1500.0,1157.5 M1200.0,1176.2 L1202.0,1177.8 L1204.7,1180.2 L1206.4,1182.6 L1206.3,1184.9 L1205.1,1187.3 L1203.9,1189.0 L1202.5,1189.9 L1201.0,1190.2 L1200.0,1190.3 M1288.7,1167.2 L1289.7,1166.0 L1291.1,1164.3 L1292.6,1163.3 L1294.3,1163.4 L1296.0,1164.2 L1297.1,1165.2 L1297.0,1166.7 L1296.3,1168.4 L1295.2,1169.7 L1293.5,1170.6 L1291.6,1171.1 L1290.0,1171.0 L1289.3,1170.0 L1288.9,1168.4 L1288.7,1167.2 M1263.0,1178.7 L1265.3,1178.5 L1268.7,1178.0 L1272.0,1177.5 L1275.4,1176.4 L1278.8,1175.1 L1281.0,1174.9 L1281.7,1176.5 L1281.2,1179.1 L1279.7,1181.3 L1276.8,1182.7 L1272.9,1183.7 L1269.4,1183.9 L1266.8,1182.5 L1264.5,1180.4 L1263.0,1178.7 M1378.1,1178.7 L1382.6,1179.4" fill="none" stroke="#000" stroke-width="3.4" stroke-linecap="round" stroke-linejoin="round"/>
<path d="M810.9,1000.5 L810.5,1000.5 L809.9,1000.3 L808.9,998.9 L807.3,995.6 L805.2,991.1 L803.6,986.4 L803.2,981.7 L803.3,976.8 L801.8,973.0 L797.3,971.2 L791.2,970.4 L785.7,969.5 L782.1,967.7 L779.2,965.8 L775.0,964.1 L768.2,962.8 L760.2,961.8 L753.6,961.4 L749.5,962.0 L746.9,963.3 L744.6,965.0 L742.6,967.1 L740.9,969.6 L739.3,972.1 L737.6,974.6 L736.0,977.0 L733.9,979.3 L731.2,981.7 L728.0,984.0 L725.0,985.5 L722.1,985.4 L719.2,984.5 L717.0,984.6 L715.6,986.8 L714.9,990.1 L714.3,993.6 L713.8,997.5 L713.5,1001.6 L712.5,1004.3 L710.6,1004.5 L708.1,1003.3 L705.4,1002.5 L702.4,1002.6 L699.3,1003.2 L696.4,1004.3 L693.8,1006.3 L691.5,1009.0 L689.3,1011.4 L687.5,1013.6 L685.9,1015.7 L683.9,1016.8 L681.2,1016.1 L678.1,1014.6 L675.0,1014.1 L672.0,1015.7 L668.9,1018.4 L666.1,1021.2 L663.6,1023.8 L661.2,1026.4 L658.9,1029.3 L656.4,1032.5 L654.0,1036.1 L651.8,1040.0 L649.9,1044.6 L648.4,1049.7 L647.3,1054.3 L646.8,1058.3 L646.7,1061.8 L647.3,1065.0 L648.9,1067.7 L651.1,1070.0 L653.6,1072.1 L656.3,1073.7 L659.2,1075.0 L661.6,1077.5 L663.2,1082.1 L664.4,1087.8 L665.2,1093.6 L665.8,1098.6 L666.1,1103.6 L666.1,1109.6 L665.3,1117.4 L664.2,1126.1 L663.4,1134.6 L663.4,1143.0 L663.8,1151.2 L663.4,1157.9 L661.9,1162.2 L659.8,1164.9 L657.1,1166.8 L653.9,1167.5 L650.2,1167.4 L646.4,1167.7 L642.7,1168.8 L639.0,1170.3 L635.7,1172.1 L633.1,1174.2 L630.9,1176.5 L629.5,1179.3 L629.1,1182.7 L629.5,1186.6 L629.5,1190.0 L628.5,1192.1 L627.1,1193.7 L625.9,1197.1 L625.1,1204.4 L624.5,1213.5 L624.1,1220.0 M804.5,1000.0 L806.0,1001.7 L808.3,1004.1 L811.2,1006.7 L814.1,1009.2 L817.6,1011.9 L822.3,1014.5 L828.9,1017.0 L836.8,1019.5 L844.6,1022.3 L852.3,1026.1 L859.9,1030.2 L867.0,1033.5 L873.0,1035.4 L878.3,1036.4 L883.7,1036.8 L889.5,1036.3 L895.3,1035.1 L900.4,1034.6 L904.7,1035.5 L908.3,1037.1 L911.6,1038.5 L915.1,1039.6 L918.3,1040.6 L920.5,1041.2 M625.0,1220.0 L624.3,1224.8 L623.3,1231.6 L623.2,1237.9 L624.1,1242.3 L625.9,1246.1 L628.6,1250.4 L632.9,1255.8 L638.3,1261.7 L642.9,1266.4 L645.8,1269.0 L647.9,1270.4 L650.0,1271.8 L652.1,1273.6 L654.2,1275.4 L657.1,1277.1 L661.6,1278.8 L666.9,1280.4 L671.4,1282.5 L674.3,1285.3 L676.5,1288.5 L678.6,1291.4 L680.7,1294.0 L682.8,1296.4 L685.7,1298.6 L689.7,1300.6 L694.4,1302.5 L700.0,1303.9 L706.7,1305.0 L714.3,1305.7 L721.4,1305.7 L727.6,1304.7 L733.5,1303.0 L739.3,1301.2 L744.7,1299.4 L750.1,1297.4 L757.1,1295.9 L767.7,1294.7 L779.8,1294.0 L789.3,1294.1 L793.4,1295.7 L794.9,1298.2 L798.2,1300.4 L805.6,1301.7 L814.8,1302.7 L823.2,1303.9 L829.3,1305.4 L834.6,1307.0 L841.1,1309.3 L850.9,1312.9 L861.8,1317.0 L869.6,1320.0 M871.4,1314.6 L877.4,1314.8 L885.9,1315.2 L894.6,1316.4 L903.9,1319.2 L913.3,1322.8 L920.0,1325.4 M920.0,1040.0 L922.6,1041.0 L926.3,1042.4 L930.7,1043.6 L935.5,1044.2 L941.0,1044.6 L946.8,1045.4 L952.9,1047.0 L959.4,1049.0 L966.4,1050.7 L974.2,1051.9 L982.6,1052.9 L991.4,1053.4 L1000.8,1053.6 L1010.6,1053.4 L1020.0,1052.5 L1028.9,1050.5 L1037.3,1047.8 L1045.0,1045.4 L1051.6,1043.5 L1057.4,1041.9 L1062.9,1040.0 L1068.0,1037.8 L1072.8,1035.3 L1077.1,1032.9 L1080.6,1030.4 L1083.8,1027.9 L1087.9,1025.7 L1093.6,1024.2 L1100.4,1023.0 L1107.5,1021.2 L1115.4,1018.3 L1123.6,1014.9 L1130.7,1012.3 L1135.1,1011.7 L1138.4,1011.9 L1143.2,1011.4 L1151.6,1009.4 L1161.6,1006.8 L1170.0,1004.3 L1175.4,1002.7 L1179.1,1001.3 L1182.5,998.9 L1185.5,994.7 L1188.2,989.5 L1191.4,984.6 L1196.0,980.7 L1201.2,977.1 L1205.7,973.9 L1209.2,971.1 L1212.1,968.7 L1214.6,966.8 L1217.0,965.4 L1219.1,964.5 L1220.5,963.9 M920.0,1323.6 L924.3,1325.4 L930.6,1328.1 L937.9,1330.7 L946.0,1333.5 L955.1,1336.3 L964.6,1337.9 L974.7,1337.2 L985.1,1335.4 L995.0,1334.3 L1004.3,1334.6 L1012.9,1335.7 L1020.0,1337.0 L1023.8,1338.2 L1026.1,1339.6 L1030.7,1341.4 L1040.5,1344.2 L1052.7,1347.3 L1062.9,1349.5 L1068.9,1349.6 L1072.9,1348.7 L1077.1,1348.6 L1082.2,1349.8 L1087.5,1351.8 L1093.2,1353.9 L1100.1,1356.2 L1107.4,1358.8 L1112.9,1361.1 L1114.7,1362.9 L1114.8,1364.4 L1116.4,1366.4 L1121.6,1369.3 L1128.4,1372.5 L1134.3,1375.4 L1138.7,1377.5 L1142.2,1379.3 L1144.6,1380.5 M1220.0,966.4 L1225.3,963.2 L1232.8,958.6 L1239.6,953.9 L1245.0,949.9 L1249.8,945.9 L1253.9,941.4 L1257.5,936.2 L1260.4,930.6 L1262.9,925.4 L1264.7,920.9 L1266.0,916.8 L1267.3,912.9 L1268.4,909.1 L1269.4,905.5 L1271.8,902.1 L1276.5,899.0 L1282.5,896.0 L1287.9,893.2 L1291.2,891.1 L1293.9,889.2 L1298.6,886.1 L1307.2,880.4 L1317.9,873.5 L1327.1,868.2 L1333.9,866.1 L1339.2,865.6 L1343.2,864.6 L1344.7,862.7 L1344.9,860.4 L1346.8,857.5 L1352.3,853.9 L1359.7,849.6 L1366.4,845.0 L1372.0,839.6 L1376.9,833.9 L1380.7,828.9 L1382.8,825.1 L1383.8,822.1 L1384.3,820.0 M1840.0,820.0 L1837.2,821.4 L1833.1,823.6 L1829.3,827.1 L1826.1,833.0 L1823.1,840.2 L1820.4,846.8 L1817.6,852.5 L1815.0,857.6 L1813.2,861.1 M1807.9,862.9 L1805.3,866.8 L1801.8,872.4 L1798.9,877.1 L1797.6,880.2 L1796.9,882.4 L1795.4,884.3 L1792.4,885.7 L1788.6,886.7 L1784.6,887.9 L1780.5,889.4 L1776.2,891.2 L1772.1,893.2 L1768.1,895.0 L1764.3,897.0 L1761.4,900.4 L1760.1,906.7 L1759.8,914.4 L1759.6,920.0 M1754.3,927.1 L1752.6,930.8 L1750.1,936.1 L1747.1,941.4 L1744.1,946.3 L1740.7,951.1 L1736.4,955.7 L1730.3,960.3 L1723.3,964.6 L1718.6,968.2 L1717.3,970.3 L1718.2,971.7 L1720.4,973.6 L1724.0,976.7 L1728.8,980.5 L1732.9,984.3 L1735.4,988.3 L1737.1,992.2 L1738.2,995.0 M1736.4,998.6 L1731.6,1003.7 L1724.8,1010.9 L1718.6,1018.2 L1713.5,1025.5 L1709.1,1032.8 L1706.1,1037.9 M1700.7,1043.2 L1695.4,1055.7 M1690.0,1068.2 L1687.6,1070.5 L1684.1,1073.7 L1681.1,1077.1 L1679.0,1080.5 L1677.4,1084.1 L1675.7,1087.9 L1673.7,1092.2 L1671.7,1096.8 L1670.4,1100.0 M1524.1,1259.5 L1523.9,1260.7 L1523.6,1262.5 L1523.9,1264.3 L1525.6,1265.8 L1528.0,1267.4 L1529.3,1269.6 L1528.8,1272.9 L1527.4,1276.7 L1525.7,1280.4 L1523.9,1282.9 L1521.9,1285.2 L1520.4,1289.3 L1519.2,1296.2 L1518.5,1305.0 L1518.6,1314.3 L1520.3,1324.8 L1522.8,1335.9 L1523.9,1344.6 L1522.0,1349.3 L1518.7,1351.7 L1516.8,1353.6 L1518.4,1355.6 L1521.3,1357.3 L1522.1,1358.9 L1518.6,1360.3 L1512.9,1361.7 L1507.9,1364.3 L1504.2,1369.3 L1501.0,1375.5 L1498.9,1380.0 M1524.7,1260.0 L1524.3,1255.8 L1523.7,1249.6 L1523.7,1242.9 L1524.2,1235.3 L1525.1,1227.1 L1526.7,1220.4 L1529.5,1216.1 L1532.9,1213.3 L1535.9,1211.2 L1538.0,1210.3 L1539.8,1210.1 L1542.0,1208.2 L1545.2,1202.8 L1548.9,1195.7 L1552.2,1189.8 L1555.3,1186.0 L1558.1,1183.4 L1560.0,1181.6 M1140.0,1380.0 L1142.5,1380.8 L1146.1,1381.9 L1150.3,1383.4 L1155.1,1385.2 L1160.3,1387.3 L1165.8,1390.3 L1172.1,1395.4 L1178.5,1401.5 L1183.0,1405.8 M1186.5,1409.3 L1188.1,1411.4 L1190.6,1414.4 L1193.4,1417.9 L1197.0,1422.1 L1200.9,1426.7 L1203.7,1429.9 M1207.2,1424.8 L1208.7,1427.4 L1210.9,1431.3 L1212.3,1436.8 L1212.2,1445.4 L1211.3,1455.4 L1210.6,1462.7 M1214.0,1464.4 L1217.2,1466.7 L1221.8,1469.9 L1226.1,1473.0 L1229.7,1475.3 L1233.2,1477.4 L1236.4,1479.9 L1239.7,1483.4 L1242.9,1487.4 L1245.0,1490.2 M1246.8,1493.6 L1246.2,1499.3 L1245.7,1507.2 L1246.8,1514.3 L1250.2,1519.2 L1255.2,1523.2 L1260.5,1528.1 L1266.3,1534.8 L1272.5,1542.4 L1277.8,1548.7 L1281.3,1552.9 L1283.8,1555.9 L1286.4,1559.1 L1289.2,1563.2 L1292.1,1567.6 L1295.0,1571.1 L1297.2,1573.2 L1299.4,1574.6 L1303.6,1576.3 L1311.2,1578.9 L1320.8,1581.9 L1329.4,1584.9 L1336.2,1587.7 L1342.0,1590.5 L1346.6,1593.5 L1349.9,1596.8 L1352.1,1600.3 L1353.5,1603.8 L1353.6,1607.4 L1353.0,1611.0 L1353.5,1614.2 L1355.9,1616.7 L1359.5,1618.8 L1363.8,1621.1 L1369.0,1624.0 L1374.9,1627.1 L1381.1,1629.7 L1387.7,1631.5 L1394.5,1632.8 L1400.0,1633.1 L1403.5,1631.8 L1405.6,1629.6 L1406.9,1628.0 M1408.6,1622.8 L1424.1,1617.6 M1437.9,1617.6 L1440.7,1616.2 L1444.7,1614.1 L1448.2,1610.7 L1451.0,1605.1 L1453.5,1598.4 L1455.1,1593.5 M1458.6,1590.1 L1462.3,1586.7 L1467.4,1581.8 L1470.6,1576.3 L1469.8,1570.6 L1467.0,1564.4 L1465.4,1557.4 L1466.7,1550.1 L1469.1,1542.1 L1470.6,1531.5 L1470.2,1516.0 L1468.8,1498.0 L1467.2,1483.3 L1465.4,1474.5 L1463.4,1469.0 L1462.0,1464.4 L1461.2,1460.4 L1461.0,1457.4 L1462.0,1454.0 L1464.6,1449.7 L1468.4,1445.0 L1472.3,1440.3 L1476.6,1436.2 L1481.1,1432.2 L1484.4,1426.5 L1485.6,1417.1 L1485.7,1406.0 L1486.1,1397.2 L1487.4,1392.7 L1489.2,1390.5 L1491.3,1388.6 L1494.2,1386.4 L1497.5,1384.7 L1499.9,1383.4 M1380.7,820.0 L1382.0,816.2 L1383.8,810.7 L1386.1,804.3 L1389.2,797.2 L1392.8,789.4 L1395.0,781.1 L1395.0,772.1 L1393.6,762.7 L1391.4,754.3 L1388.3,747.7 L1384.4,742.1 L1380.7,736.4 L1377.2,730.1 L1373.9,723.9 L1371.8,718.6 L1371.4,714.8 L1372.2,712.0 L1373.6,709.6 L1375.4,707.3 L1377.7,705.4 L1380.7,704.3 L1384.4,704.7 L1388.7,705.9 L1393.2,706.1 L1398.0,704.4 L1403.1,701.6 L1407.5,698.9 L1410.5,696.5 L1413.0,694.0 L1416.4,691.8 L1421.7,689.9 L1428.0,688.1 L1434.3,686.4 L1440.6,684.7 L1446.9,683.0 L1452.1,681.1 L1455.6,679.0 L1458.2,676.8 L1461.1,673.9 L1464.9,670.2 L1469.1,665.9 L1473.6,661.4 L1478.3,656.7 L1483.3,651.7 L1487.9,647.1 L1492.1,643.3 L1495.9,639.9 L1498.6,636.4 L1499.0,632.7 L1498.2,628.9 L1498.6,625.7 L1501.3,623.6 L1505.3,622.1 L1509.3,620.4 L1513.0,618.1 L1516.7,615.7 L1520.0,613.2 L1522.4,610.6 L1524.5,607.9 L1527.1,606.1 L1531.5,605.5 L1536.5,605.8 L1540.0,606.1 M1540.0,607.9 L1542.7,606.5 L1546.6,604.8 L1550.7,604.3 L1554.8,606.1 L1559.1,609.2 L1563.2,611.4 L1567.2,611.8 L1571.0,611.4 L1573.9,611.4 L1575.3,613.1 L1575.9,615.3 L1577.5,615.0 L1581.1,610.4 L1585.6,603.5 L1590.0,597.1 L1593.7,592.2 L1597.2,587.8 L1600.7,584.6 L1604.3,583.5 L1607.9,583.5 L1611.4,582.9 L1614.9,580.7 L1618.4,578.0 L1622.1,575.7 L1626.2,574.0 L1630.4,572.7 L1634.6,572.1 L1638.6,573.1 L1642.6,574.9 L1647.1,575.7 L1653.0,574.4 L1659.4,572.1 L1665.0,570.4 L1668.9,569.7 L1672.0,569.6 L1675.7,570.4 L1680.9,572.5 L1686.6,575.4 L1691.8,577.5 L1696.2,578.0 L1699.9,577.8 L1702.5,577.5 M1707.9,581.1 L1709.3,584.4 L1711.6,589.2 L1715.0,593.6 L1720.1,596.9 L1726.4,599.9 L1732.9,602.5 L1739.3,604.7 L1745.9,606.5 L1752.5,607.9 L1759.8,608.8 L1767.1,609.3 L1772.1,609.6 M1765.0,616.8 L1766.7,619.8 L1769.2,623.9 L1772.1,627.5 L1775.6,629.5 L1779.4,630.9 L1782.9,632.9 L1785.4,636.1 L1787.6,639.9 L1790.0,643.6 L1792.8,647.0 L1795.9,650.3 L1798.9,652.5 L1802.2,653.2 L1805.5,652.8 L1807.9,652.5 M1807.9,657.9 L1808.8,660.9 L1810.1,665.3 L1811.4,670.4 L1813.1,676.2 L1814.9,682.7 L1815.0,688.2 L1811.8,691.9 L1807.1,694.6 L1804.3,697.1 L1804.9,699.5 L1807.6,701.6 L1811.4,704.3 L1816.7,707.9 L1823.2,712.2 L1829.3,716.8 L1834.5,721.8 L1839.3,727.2 L1843.6,732.9 L1847.1,738.5 L1850.0,744.4 L1852.5,750.7 L1854.8,758.0 L1856.7,765.7 L1857.9,772.1 L1857.8,776.3 L1856.9,779.3 L1856.1,782.9 L1855.7,787.6 L1855.3,793.0 L1854.3,798.9 L1852.0,806.4 L1849.2,814.4 L1847.1,820.0 M1560.0,1185.7 L1561.1,1183.1 L1562.8,1179.6 L1565.4,1176.8 L1568.9,1175.9 L1573.3,1175.7 L1577.9,1175.0 L1582.6,1172.4 L1587.4,1169.1 L1592.1,1167.9 L1596.2,1170.5 L1600.1,1175.1 L1604.6,1178.6 L1610.2,1179.7 L1616.3,1179.7 L1622.5,1179.5 L1628.4,1180.0 L1634.3,1180.3 L1640.4,1178.6 L1647.4,1173.1 L1654.6,1165.6 L1660.0,1158.9 L1662.4,1154.2 L1663.0,1150.3 L1663.6,1146.4 L1664.8,1142.4 L1666.0,1138.4 L1667.1,1133.9 L1668.3,1128.9 L1669.5,1123.5 L1670.7,1117.9 L1672.0,1111.4 L1673.4,1104.7 L1674.3,1100.0" fill="none" stroke="#000" stroke-width="4.6" stroke-linecap="round" stroke-linejoin="round"/>
<rect x="621.0" y="480.3" width="1240.4" height="1240.4" fill="none" stroke="#3f8ef0" stroke-width="4.4"/><path d="M1241.2,340 V480.3" stroke="#3f8ef0" stroke-width="2.2"/><circle cx="1241.2" cy="340.2" r="9.3" fill="#3f8ef0"/><circle cx="621.0" cy="480.3" r="7.4" fill="#fff" stroke="#3f8ef0" stroke-width="3.7"/><circle cx="1241.2" cy="480.3" r="7.4" fill="#fff" stroke="#3f8ef0" stroke-width="3.7"/><circle cx="1861.4" cy="480.3" r="7.4" fill="#fff" stroke="#3f8ef0" stroke-width="3.7"/><circle cx="621.0" cy="1100.5" r="7.4" fill="#fff" stroke="#3f8ef0" stroke-width="3.7"/><circle cx="1861.4" cy="1100.5" r="7.4" fill="#fff" stroke="#3f8ef0" stroke-width="3.7"/><circle cx="621.0" cy="1720.7" r="7.4" fill="#fff" stroke="#3f8ef0" stroke-width="3.7"/><circle cx="1241.2" cy="1720.7" r="7.4" fill="#fff" stroke="#3f8ef0" stroke-width="3.7"/><circle cx="1861.4" cy="1720.7" r="7.4" fill="#fff" stroke="#3f8ef0" stroke-width="3.7"/><circle cx="532.4" cy="1809.3" r="18.6" fill="#ec6462"/><g fill="none" stroke="#85878c" stroke-width="2.6" stroke-linecap="round" stroke-linejoin="round"><path d="M282.5,1811.3 L295.8,1797.6 L309.3,1811.3"/><path d="M277.5,1879 V1874 Q277.5,1870 281.5,1870 H286.5 M305,1870 H310 Q314,1870 314,1874 V1879 M314,1897 V1902 Q314,1906 310,1906 H305 M286.5,1906 H281.5 Q277.5,1906 277.5,1902 V1897 M286,1888 H305.5 M295.8,1878.5 V1897.5"/><circle cx="371.6" cy="1887.1" r="17"/><path d="M384,1899.5 L391.4,1906.9 M363,1887.1 H380.3"/><circle cx="703.4" cy="1887.1" r="17"/><path d="M715.8,1899.5 L723.2,1906.9 M694.6,1887.1 H712.2 M703.4,1878.3 V1895.9"/></g><rect x="429.6" y="1877.2" width="216.4" height="8.5" rx="4.25" fill="#ebebed"/><rect x="429.6" y="1877.2" width="40" height="8.5" rx="4.25" fill="#85878c"/><circle cx="467.7" cy="1881.4" r="11.6" fill="#fff" stroke="#85878c" stroke-width="4"/><rect x="2256" y="381.5" width="720" height="2" fill="#e6e6e8"/><rect x="2376" y="379.9" width="92" height="4" fill="#4f5054"/><path d="M2906.4,440.6 L2919.7,455.2 L2933,440.6 M2906.4,794.9 L2919.7,809.1 L2933,794.9" fill="none" stroke="#85878c" stroke-width="2.6" stroke-linecap="round" stroke-linejoin="round"/><rect x="2453.5" y="497.7" width="188.5" height="59.9" rx="14" fill="#fff" stroke="#b5b7ba" stroke-width="2"/><rect x="2749.4" y="497.7" width="188.5" height="59.9" rx="14" fill="#fff" stroke="#b5b7ba" stroke-width="2"/><rect x="2453.5" y="577.7" width="188.5" height="59.9" rx="14" fill="#fff" stroke="#b5b7ba" stroke-width="2"/><rect x="2749.4" y="577.7" width="188.5" height="59.9" rx="14" fill="#fff" stroke="#b5b7ba" stroke-width="2"/><rect x="2453.5" y="657.9" width="188.5" height="59.9" rx="14" fill="#fff" stroke="#b5b7ba" stroke-width="2"/><rect x="2753.5" y="657.3" width="84.3" height="60.4" rx="14" fill="#fff" stroke="#d3d4d7" stroke-width="2"/><rect x="2857.3" y="657.3" width="84.3" height="60.4" rx="14" fill="#fff" stroke="#d3d4d7" stroke-width="2"/><path d="M2673.5,606 V600 Q2673.5,591.5 2680,591.5 Q2686.5,591.5 2686.5,600 V606" fill="none" stroke="#5f6064" stroke-width="3"/><rect x="2669.8" y="604.5" width="20.6" height="17.5" rx="1.5" fill="#5f6064"/><circle cx="2619.9" cy="683.2" r="3.6" fill="none" stroke="#b9bbbe" stroke-width="2"/><path d="M2424,676 L2411.5,699.5 H2436.7 M2418,688 Q2424,692 2423,702" fill="none" stroke="#85878b" stroke-width="2" stroke-linecap="round"/><path d="M2793,671.5 L2776.5,707.5 H2793 Z" fill="none" stroke="#85878c" stroke-width="2"/><path d="M2797,671.5 L2815.5,707.5 H2797 Z" fill="#85878c"/><path d="M2883,670.5 L2920.5,684.5 V687.6 H2883 Z" fill="none" stroke="#85878c" stroke-width="2" stroke-linejoin="round"/><path d="M2882,691.8 H2921 V695 L2882,710 Z" fill="#85878c"/><rect x="2288" y="751.7" width="656" height="2" fill="#dcdde0"/><rect x="2288" y="1093.6" width="656" height="2" fill="#dcdde0"/><rect x="2289.5" y="851.4" width="148.7" height="148.6" rx="8" fill="#fff" stroke="#b5b7ba" stroke-width="2"/><rect x="2455.4" y="851.4" width="148.7" height="148.6" rx="8" fill="#fff" stroke="#b5b7ba" stroke-width="2"/><rect x="2627.3" y="851.4" width="148.7" height="148.6" rx="8" fill="#fff" stroke="#3d8ef0" stroke-width="2"/><rect x="2793.8" y="851.4" width="148.7" height="148.6" rx="8" fill="#fff" stroke="#b5b7ba" stroke-width="2"/><defs><pattern id="ht" width="8" height="8" patternUnits="userSpaceOnUse" patternTransform="rotate(40)"><rect width="8" height="8" fill="#fff"/><path d="M4,0.5 L7.5,4 L4,7.5 L0.5,4 Z" fill="#000"/></pattern>
<clipPath id="tc0"><rect x="2290.5" y="852.4" width="146.7" height="146.6" rx="7"/></clipPath>
<clipPath id="tc1"><rect x="2456.4" y="852.4" width="146.7" height="146.6" rx="7"/></clipPath>
<clipPath id="tc2"><rect x="2628.3" y="852.4" width="146.7" height="146.6" rx="7"/></clipPath>
<clipPath id="tc3"><rect x="2794.8" y="852.4" width="146.7" height="146.6" rx="7"/></clipPath>
</defs>
<g clip-path="url(#tc0)"><g transform="translate(2290.5,852.4) scale(1.4670)"><path d="M54,24 C60,20 68,20 74,26 C78,32 76,45 70,56 C64,65 56,70 48,71 L46,66 C54,64 61,58 65,50 C70,40 71,32 67,28 C63,25 58,26 54,28 Z" fill="#000" stroke="#000" stroke-width="3"/><path d="M38,63 C40,70 46,74 54,73 C62,72 68,64 70,54 L66,55 C63,63 57,67 51,67 C45,67 42,64 41,60 Z" fill="#000" stroke="#000" stroke-width="3"/><path d="M18,56 C22,52 27,52 30,57 C33,63 34,70 33,77 C29,77 25,73 22,67 C20,63 18,60 18,56 Z" fill="#000" stroke="#000" stroke-width="3"/><path d="M90,49 C94,44 97,42 100,41 L100,92 L90,92 C87,84 86,76 89,68 C92,62 93,55 90,49 Z" fill="#000" stroke="#000" stroke-width="3"/><path d="M60,100 C66,93 76,90 86,88 C90,92 92,96 92,100 Z" fill="#000" stroke="#000" stroke-width="3"/><path d="M17,100 C22,95 26,90 28,84 C33,88 36,94 38,100 Z" fill="#000" stroke="#000" stroke-width="3"/><path d="M35,48 C35,38 40,28 50,18 C56,13 63,10 70,9" fill="none" stroke="#000" stroke-width="2.6"/><path d="M52,15 C60,12 69,10 81,14" fill="none" stroke="#000" stroke-width="2.6"/><path d="M83,19 C89,17 95,16 100,15" fill="none" stroke="#000" stroke-width="2.6"/><path d="M40,58 C38,44 44,30 56,24 C66,20 72,26 70,36 C68,46 60,56 50,60 C45,62 41,61 40,58 Z" fill="none" stroke="#000" stroke-width="2.6"/><path d="M72,57 C80,60 88,56 94,48 C97,44 99,42 100,40" fill="none" stroke="#000" stroke-width="2.6"/><path d="M47,76 C52,80 60,80 66,76" fill="none" stroke="#000" stroke-width="2.6"/><path d="M14,68 L15,74" fill="none" stroke="#000" stroke-width="2.6"/><path d="M58,98 C66,88 80,84 90,80" fill="none" stroke="#000" stroke-width="2.6"/><path d="M44,60 C46,66 52,68 58,66 L62,70 C55,74 46,72 42,66 Z" fill="#000"/><path d="M30,80 C36,84 40,92 42,100 L30,100 Z" fill="#000"/></g></g>
<g clip-path="url(#tc1)"><g transform="translate(2456.4,852.4) scale(1.4670)"><path d="M33,100 C30,60 40,25 60,14 C75,8 92,12 100,16 L100,100 Z" fill="#e4e4e4"/><path d="M40,58 C38,44 44,30 56,24 C66,20 72,26 70,36 C68,46 60,56 50,60 C45,62 41,61 40,58 Z" fill="#f4f4f4"/><path d="M54,24 C60,20 68,20 74,26 C78,32 76,45 70,56 C64,65 56,70 48,71 L46,66 C54,64 61,58 65,50 C70,40 71,32 67,28 C63,25 58,26 54,28 Z" fill="#5a5a5a" stroke="#444" stroke-width="1"/><path d="M38,63 C40,70 46,74 54,73 C62,72 68,64 70,54 L66,55 C63,63 57,67 51,67 C45,67 42,64 41,60 Z" fill="#5a5a5a" stroke="#444" stroke-width="1"/><path d="M18,56 C22,52 27,52 30,57 C33,63 34,70 33,77 C29,77 25,73 22,67 C20,63 18,60 18,56 Z" fill="#5a5a5a" stroke="#444" stroke-width="1"/><path d="M90,49 C94,44 97,42 100,41 L100,92 L90,92 C87,84 86,76 89,68 C92,62 93,55 90,49 Z" fill="#5a5a5a" stroke="#444" stroke-width="1"/><path d="M60,100 C66,93 76,90 86,88 C90,92 92,96 92,100 Z" fill="#5a5a5a" stroke="#444" stroke-width="1"/><path d="M17,100 C22,95 26,90 28,84 C33,88 36,94 38,100 Z" fill="#5a5a5a" stroke="#444" stroke-width="1"/><path d="M35,48 C35,38 40,28 50,18 C56,13 63,10 70,9" fill="none" stroke="#333" stroke-width="1.6"/><path d="M52,15 C60,12 69,10 81,14" fill="none" stroke="#333" stroke-width="1.6"/><path d="M83,19 C89,17 95,16 100,15" fill="none" stroke="#333" stroke-width="1.6"/><path d="M40,58 C38,44 44,30 56,24 C66,20 72,26 70,36 C68,46 60,56 50,60 C45,62 41,61 40,58 Z" fill="none" stroke="#333" stroke-width="1.6"/><path d="M72,57 C80,60 88,56 94,48 C97,44 99,42 100,40" fill="none" stroke="#333" stroke-width="1.6"/><path d="M47,76 C52,80 60,80 66,76" fill="none" stroke="#333" stroke-width="1.6"/><path d="M14,68 L15,74" fill="none" stroke="#333" stroke-width="1.6"/><path d="M58,98 C66,88 80,84 90,80" fill="none" stroke="#333" stroke-width="1.6"/><path d="M20,70 C26,80 30,92 30,100 L12,100 C14,88 16,78 20,70 Z" fill="#8a8a8a"/></g></g>
<g clip-path="url(#tc2)"><g transform="translate(2628.3,852.4) scale(1.4670)"><path d="M54,24 C60,20 68,20 74,26 C78,32 76,45 70,56 C64,65 56,70 48,71 L46,66 C54,64 61,58 65,50 C70,40 71,32 67,28 C63,25 58,26 54,28 Z" fill="#151212"/><path d="M38,63 C40,70 46,74 54,73 C62,72 68,64 70,54 L66,55 C63,63 57,67 51,67 C45,67 42,64 41,60 Z" fill="#151212"/><path d="M18,56 C22,52 27,52 30,57 C33,63 34,70 33,77 C29,77 25,73 22,67 C20,63 18,60 18,56 Z" fill="#151212"/><path d="M90,49 C94,44 97,42 100,41 L100,92 L90,92 C87,84 86,76 89,68 C92,62 93,55 90,49 Z" fill="#151212"/><path d="M60,100 C66,93 76,90 86,88 C90,92 92,96 92,100 Z" fill="#151212"/><path d="M17,100 C22,95 26,90 28,84 C33,88 36,94 38,100 Z" fill="#151212"/><path d="M35,48 C35,38 40,28 50,18 C56,13 63,10 70,9" fill="none" stroke="#151212" stroke-width="1.5"/><path d="M52,15 C60,12 69,10 81,14" fill="none" stroke="#151212" stroke-width="1.5"/><path d="M83,19 C89,17 95,16 100,15" fill="none" stroke="#151212" stroke-width="1.5"/><path d="M40,58 C38,44 44,30 56,24 C66,20 72,26 70,36 C68,46 60,56 50,60 C45,62 41,61 40,58 Z" fill="none" stroke="#151212" stroke-width="1.5"/><path d="M72,57 C80,60 88,56 94,48 C97,44 99,42 100,40" fill="none" stroke="#151212" stroke-width="1.5"/><path d="M47,76 C52,80 60,80 66,76" fill="none" stroke="#151212" stroke-width="1.5"/><path d="M14,68 L15,74" fill="none" stroke="#151212" stroke-width="1.5"/><path d="M58,98 C66,88 80,84 90,80" fill="none" stroke="#151212" stroke-width="1.5"/></g></g>
<g clip-path="url(#tc3)"><g transform="translate(2794.8,852.4) scale(1.4670)"><path d="M30,45 C40,15 70,4 100,6 L100,100 L30,100 Z" fill="url(#ht)"/><path d="M8,50 C25,52 45,62 60,76 C68,84 74,92 78,100 L58,100 C50,90 40,80 25,72 C18,68 12,64 8,62 Z" fill="#000"/><path d="M55,50 C65,45 80,48 92,58 C86,64 76,64 66,60 Z" fill="#000"/><path d="M84,62 C94,70 100,80 100,100 L86,100 C88,86 87,74 84,62 Z" fill="#000"/><path d="M10,78 C20,84 30,92 36,100 L14,100 C12,92 10,86 10,78 Z" fill="#000"/></g></g>
<rect x="2289.5" y="851.4" width="148.7" height="148.6" rx="8" fill="none" stroke="#b5b7ba" stroke-width="2"/>
<rect x="2455.4" y="851.4" width="148.7" height="148.6" rx="8" fill="none" stroke="#b5b7ba" stroke-width="2"/>
<rect x="2627.3" y="851.4" width="148.7" height="148.6" rx="8" fill="none" stroke="#3d8ef0" stroke-width="2"/>
<rect x="2793.8" y="851.4" width="148.7" height="148.6" rx="8" fill="none" stroke="#b5b7ba" stroke-width="2"/><rect x="2287.9" y="1810" width="655.7" height="79.8" rx="14" fill="#2b2c2e" filter="url(#btnsh)"/></svg>

<div class="tx" style="left:1351.69px;top:89.56px;font-family:'Liberation Sans',sans-serif;font-weight:bold;font-size:27.10px;color:#aaa7ae;">Snapmaker Luban 4.1.4 / New *</div>
<div class="tx" style="left:169.39px;top:213.02px;font-family:'Liberation Sans',sans-serif;font-weight:normal;font-size:27.97px;color:#55575c;transform:scaleX(1.0317);transform-origin:0 0;">Home</div>
<div class="tx" style="left:276.86px;top:213.02px;font-family:'Liberation Sans',sans-serif;font-weight:normal;font-size:27.97px;color:#55575c;transform:scaleX(1.0116);transform-origin:0 0;">Workspace</div>
<div class="tx" style="left:464.58px;top:213.02px;font-family:'Liberation Sans',sans-serif;font-weight:normal;font-size:27.97px;color:#55575c;transform:scaleX(0.9664);transform-origin:0 0;">Save</div>
<div class="tx" style="left:588.22px;top:213.02px;font-family:'Liberation Sans',sans-serif;font-weight:normal;font-size:27.97px;color:#55575c;transform:scaleX(1.0372);transform-origin:0 0;">Undo</div>
<div class="tx" style="left:819.27px;top:213.02px;font-family:'Liberation Sans',sans-serif;font-weight:normal;font-size:27.97px;color:#55575c;transform:scaleX(1.0279);transform-origin:0 0;">Job Setup</div>
<div class="tx" style="left:1002.09px;top:213.02px;font-family:'Liberation Sans',sans-serif;font-weight:normal;font-size:27.97px;color:#55575c;transform:scaleX(0.9088);transform-origin:0 0;">Top</div>
<div class="tx" style="left:1106.62px;top:213.02px;font-family:'Liberation Sans',sans-serif;font-weight:normal;font-size:27.97px;color:#55575c;transform:scaleX(1.0637);transform-origin:0 0;">Bottom</div>
<div class="tx" style="left:717.47px;top:213.02px;font-family:'Liberation Sans',sans-serif;font-weight:normal;font-size:27.97px;color:#cfd0d4;transform:scaleX(0.9954);transform-origin:0 0;">Redo</div>
<div class="tx" style="left:1231.50px;top:214.52px;font-family:'Liberation Sans',sans-serif;font-weight:normal;font-size:27.97px;color:#55575c;transform:scaleX(1.0032);transform-origin:0 0;">Camera Capture</div>
<div class="tx" style="left:448.13px;top:459.96px;font-family:'Liberation Sans',sans-serif;font-weight:normal;font-size:38.99px;color:#85878b;transform:scaleX(0.9468);transform-origin:0 0;">150</div>
<div class="tx" style="left:449.11px;top:902.58px;font-family:'Liberation Sans',sans-serif;font-weight:normal;font-size:38.26px;color:#85878b;transform:scaleX(0.9379);transform-origin:0 0;">100</div>
<div class="tx" style="left:460.62px;top:1345.75px;font-family:'Liberation Sans',sans-serif;font-weight:normal;font-size:37.83px;color:#85878b;transform:scaleX(0.9119);transform-origin:0 0;">50</div>
<div class="tx" style="left:471.10px;top:1789.36px;font-family:'Liberation Sans',sans-serif;font-weight:normal;font-size:36.52px;color:#85878b;transform:scaleX(0.8899);transform-origin:0 0;">0</div>
<div class="tx" style="left:955.86px;top:1832.56px;font-family:'Liberation Sans',sans-serif;font-weight:normal;font-size:36.52px;color:#85878b;transform:scaleX(0.9841);transform-origin:0 0;">50</div>
<div class="tx" style="left:1388.31px;top:1832.56px;font-family:'Liberation Sans',sans-serif;font-weight:normal;font-size:36.52px;color:#85878b;transform:scaleX(0.9825);transform-origin:0 0;">100</div>
<div class="tx" style="left:1831.31px;top:1832.56px;font-family:'Liberation Sans',sans-serif;font-weight:normal;font-size:36.52px;color:#85878b;transform:scaleX(0.9825);transform-origin:0 0;">150</div>
<div class="tx" style="left:341.51px;top:1788.62px;font-family:'Liberation Sans',sans-serif;font-weight:bold;font-size:33.62px;color:#1f1f21;transform:scaleX(0.8867);transform-origin:0 0;">Object List</div>
<div class="tx" style="left:2391.46px;top:312.78px;font-family:'Liberation Serif',serif;font-weight:bold;font-size:38.46px;color:#222325;transform:scaleX(0.9397);transform-origin:0 0;">Edit</div>
<div class="tx" style="left:2728.91px;top:312.78px;font-family:'Liberation Serif',serif;font-weight:normal;font-size:38.46px;color:#898b8f;transform:scaleX(0.9452);transform-origin:0 0;">Process</div>
<div class="tx" style="left:2288.19px;top:430.47px;font-family:'Liberation Sans',sans-serif;font-weight:bold;font-size:33.33px;color:#505155;transform:scaleX(0.9241);transform-origin:0 0;">Transformation</div>
<div class="tx" style="left:2286.51px;top:784.77px;font-family:'Liberation Sans',sans-serif;font-weight:bold;font-size:33.33px;color:#505155;transform:scaleX(0.9169);transform-origin:0 0;">Processing Mode</div>
<div class="tx" style="left:2286.17px;top:514.16px;font-family:'Liberation Sans',sans-serif;font-weight:normal;font-size:28.99px;color:#222325;transform:scaleX(1.0053);transform-origin:0 0;">Move</div>
<div class="tx" style="left:2287.25px;top:594.36px;font-family:'Liberation Sans',sans-serif;font-weight:normal;font-size:28.99px;color:#222325;transform:scaleX(0.9615);transform-origin:0 0;">Size</div>
<div class="tx" style="left:2286.20px;top:674.26px;font-family:'Liberation Sans',sans-serif;font-weight:normal;font-size:28.99px;color:#222325;transform:scaleX(0.9897);transform-origin:0 0;">Rotate</div>
<div class="tx" style="left:2421.10px;top:512.20px;font-family:'Liberation Serif',serif;font-weight:normal;font-size:28.31px;color:#85878b;transform:scaleX(1.0675);transform-origin:0 0;">X</div>
<div class="tx" style="left:2718.02px;top:512.20px;font-family:'Liberation Serif',serif;font-weight:normal;font-size:28.31px;color:#85878b;transform:scaleX(0.9798);transform-origin:0 0;">Y</div>
<div class="tx" style="left:2418.60px;top:592.40px;font-family:'Liberation Serif',serif;font-weight:normal;font-size:28.31px;color:#85878b;transform:scaleX(0.9771);transform-origin:0 0;">W</div>
<div class="tx" style="left:2717.44px;top:592.40px;font-family:'Liberation Serif',serif;font-weight:normal;font-size:28.31px;color:#85878b;transform:scaleX(1.0093);transform-origin:0 0;">H</div>
<div class="tx" style="left:2468.89px;top:514.16px;font-family:'Liberation Sans',sans-serif;font-weight:normal;font-size:28.99px;color:#222325;transform:scaleX(1.0819);transform-origin:0 0;">80</div>
<div class="tx" style="left:2765.10px;top:514.16px;font-family:'Liberation Sans',sans-serif;font-weight:normal;font-size:28.99px;color:#222325;transform:scaleX(1.0718);transform-origin:0 0;">80</div>
<div class="tx" style="left:2469.58px;top:594.36px;font-family:'Liberation Sans',sans-serif;font-weight:normal;font-size:28.99px;color:#222325;transform:scaleX(1.0672);transform-origin:0 0;">140</div>
<div class="tx" style="left:2765.70px;top:594.36px;font-family:'Liberation Sans',sans-serif;font-weight:normal;font-size:28.99px;color:#222325;transform:scaleX(1.0583);transform-origin:0 0;">140</div>
<div class="tx" style="left:2469.01px;top:674.26px;font-family:'Liberation Sans',sans-serif;font-weight:normal;font-size:28.99px;color:#222325;transform:scaleX(1.1141);transform-origin:0 0;">0</div>
<div class="tx" style="left:2576.73px;top:515.85px;font-family:'Liberation Sans',sans-serif;font-weight:normal;font-size:27.00px;color:#b9bbbe;transform:scaleX(1.1231);transform-origin:0 0;">mm</div>
<div class="tx" style="left:2873.36px;top:515.85px;font-family:'Liberation Sans',sans-serif;font-weight:normal;font-size:27.00px;color:#b9bbbe;transform:scaleX(1.1063);transform-origin:0 0;">mm</div>
<div class="tx" style="left:2576.73px;top:596.05px;font-family:'Liberation Sans',sans-serif;font-weight:normal;font-size:27.00px;color:#b9bbbe;transform:scaleX(1.1231);transform-origin:0 0;">mm</div>
<div class="tx" style="left:2873.36px;top:596.05px;font-family:'Liberation Sans',sans-serif;font-weight:normal;font-size:27.00px;color:#b9bbbe;transform:scaleX(1.1063);transform-origin:0 0;">mm</div>
<div class="tx" style="left:2331.43px;top:1010.67px;font-family:'Liberation Sans',sans-serif;font-weight:normal;font-size:27.68px;color:#222325;transform:scaleX(0.9809);transform-origin:0 0;">B&amp;W</div>
<div class="tx" style="left:2453.71px;top:1010.67px;font-family:'Liberation Sans',sans-serif;font-weight:normal;font-size:27.68px;color:#222325;transform:scaleX(0.9331);transform-origin:0 0;">GREYSCALE</div>
<div class="tx" style="left:2648.37px;top:1010.67px;font-family:'Liberation Sans',sans-serif;font-weight:normal;font-size:27.68px;color:#3d8ef0;transform:scaleX(0.9378);transform-origin:0 0;">VECTOR</div>
<div class="tx" style="left:2795.43px;top:1010.67px;font-family:'Liberation Sans',sans-serif;font-weight:normal;font-size:27.68px;color:#222325;transform:scaleX(0.9812);transform-origin:0 0;">HALFTONE</div>
<div class="tx" style="left:2587.64px;top:1832.72px;font-family:'Liberation Serif',serif;font-weight:normal;font-size:31.54px;color:#ffffff;transform:scaleX(0.9121);transform-origin:0 0;">Next</div>

</body></html>
